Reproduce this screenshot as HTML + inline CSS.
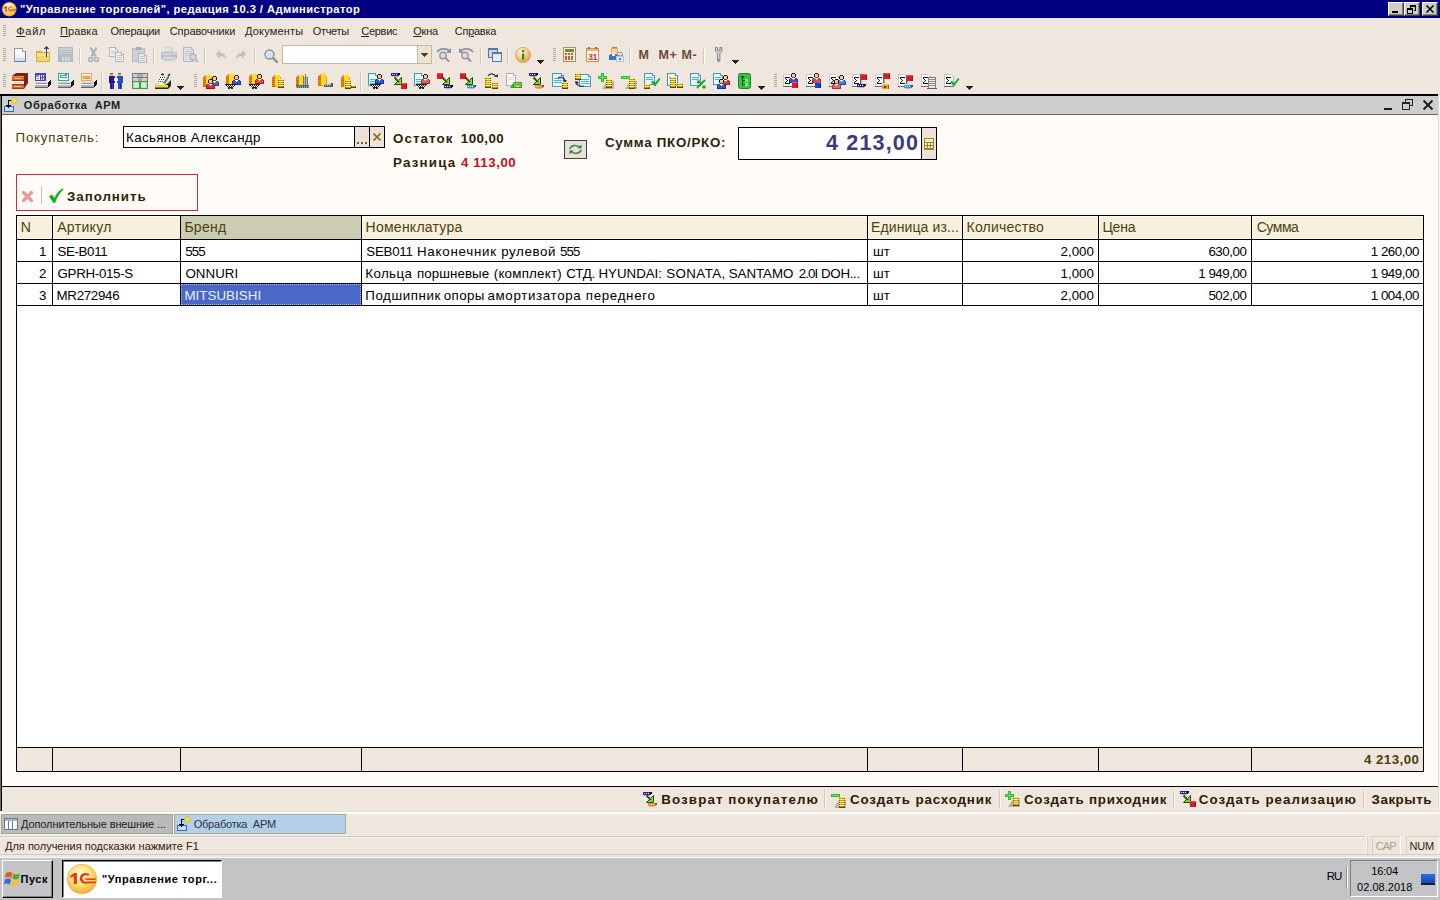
<!DOCTYPE html>
<html lang="ru"><head><meta charset="utf-8"><title>1C</title>
<style>
*{box-sizing:border-box;margin:0;padding:0}
html,body{width:1440px;height:900px;overflow:hidden;background:#efe6dd;font-family:"Liberation Sans",sans-serif}
body{position:relative}
.a{position:absolute}
.t{position:absolute;white-space:pre;line-height:1}
.t u{text-decoration:underline}
svg{overflow:visible}
</style></head>
<body>
<div class="a" style="left:0px;top:0px;width:1440px;height:18px;background:#000080;"></div>
<span class="t" style="left:20.00px;top:3.52px;font-size:11.2px;color:#fff;letter-spacing:0.432px;font-weight:bold;">&quot;Управление торговлей&quot;, редакция 10.3 / Администратор</span>
<div class="a" style="left:1388px;top:2px;width:16px;height:14px;background:#d0ccc8;border:1px solid;border-color:#fff #404040 #404040 #fff;box-shadow:inset -1px -1px 0 #808080"></div>
<div class="a" style="left:1404px;top:2px;width:16px;height:14px;background:#d0ccc8;border:1px solid;border-color:#fff #404040 #404040 #fff;box-shadow:inset -1px -1px 0 #808080"></div>
<div class="a" style="left:1422px;top:2px;width:16px;height:14px;background:#d0ccc8;border:1px solid;border-color:#fff #404040 #404040 #fff;box-shadow:inset -1px -1px 0 #808080"></div>
<div class="a" style="left:1392px;top:11px;width:6px;height:2px;background:#000;"></div>
<svg class="a" style="left:1404px;top:2px" width="16" height="14" shape-rendering="crispEdges"><path d="M6 3h6v2h-6zM6 5h1v1h-1zM11 5h1v4h-1zM10 8h2v1h-2zM3 6h6v2h-6zM3 8h1v4h-1zM8 8h1v4h-1zM3 11h6v1h-6z" fill="#000"/></svg>
<svg class="a" style="left:1422px;top:2px" width="16" height="14"><path d="M4.5 3.5l7 7M11.5 3.5l-7 7" stroke="#000" stroke-width="1.6"/></svg>
<span class="t" style="left:16.20px;top:25.69px;font-size:11px;color:#30240a;letter-spacing:0.758px;"><u>Ф</u>айл</span>
<span class="t" style="left:60.10px;top:25.69px;font-size:11px;color:#30240a;letter-spacing:0.052px;"><u>П</u>равка</span>
<span class="t" style="left:110.50px;top:25.69px;font-size:11px;color:#30240a;letter-spacing:-0.244px;">Операции</span>
<span class="t" style="left:169.70px;top:25.69px;font-size:11px;color:#30240a;letter-spacing:-0.099px;">Справочники</span>
<span class="t" style="left:245.00px;top:25.69px;font-size:11px;color:#30240a;letter-spacing:0.175px;">Документы</span>
<span class="t" style="left:312.70px;top:25.69px;font-size:11px;color:#30240a;letter-spacing:-0.323px;">Отчеты</span>
<span class="t" style="left:361.30px;top:25.69px;font-size:11px;color:#30240a;letter-spacing:-0.293px;"><u>С</u>ервис</span>
<span class="t" style="left:413.30px;top:25.69px;font-size:11px;color:#30240a;letter-spacing:-0.248px;"><u>О</u>кна</span>
<span class="t" style="left:454.80px;top:25.69px;font-size:11px;color:#30240a;letter-spacing:-0.272px;">Сп<u>р</u>авка</span>
<div class="a" style="left:0px;top:94px;width:1438px;height:2px;background:#000;"></div>
<div class="a" style="left:0px;top:96px;width:1px;height:716px;background:#6e6a66;"></div>
<div class="a" style="left:1px;top:96px;width:1px;height:716px;background:#000;"></div>
<div class="a" style="left:2px;top:96px;width:1436px;height:18px;background:#cecece;"></div>
<div class="a" style="left:2px;top:114px;width:1436px;height:1px;background:#6a6662;"></div>
<div class="a" style="left:2px;top:115px;width:1436px;height:671px;background:#fffcf7;"></div>
<div class="a" style="left:1438px;top:96px;width:1px;height:716px;background:#dcd8d4;"></div>
<div class="a" style="left:1439px;top:96px;width:1px;height:716px;background:#fffcf7;"></div>
<div class="a" style="left:2px;top:786px;width:1436px;height:1px;background:#000;"></div>
<span class="t" style="left:23.80px;top:99.69px;font-size:11px;color:#1c1c1c;letter-spacing:0.578px;font-weight:bold;">Обработка  АРМ</span>
<div class="a" style="left:1384px;top:108px;width:8px;height:2px;background:#1a1a1a;"></div>
<svg class="a" style="left:1398px;top:97px" width="18" height="16" shape-rendering="crispEdges"><path d="M7 2h8v1h-8zM7 3h1v2h-1zM14 3h1v6h-1zM12 8h2v1h-2zM4 5h8v2h-8zM4 7h1v5h-1zM11 7h1v5h-1zM4 12h8v1h-8z" fill="#222"/></svg>
<svg class="a" style="left:1420px;top:97px" width="16" height="16"><path d="M3.5 3.5l9 9M12.5 3.5l-9 9" stroke="#1a1a1a" stroke-width="1.8"/></svg>
<span class="t" style="left:15.60px;top:130.72px;font-size:13.33px;color:#4a3c12;letter-spacing:0.758px;">Покупатель:</span>
<div class="a" style="left:123px;top:126px;width:262px;height:22px;background:#fff;border:1px solid #000"></div>
<div class="a" style="left:354px;top:127px;width:1px;height:20px;background:#000;"></div>
<div class="a" style="left:369px;top:127px;width:1px;height:20px;background:#000;"></div>
<div class="a" style="left:355px;top:127px;width:14px;height:20px;background:#ebe3d9;"></div>
<div class="a" style="left:370px;top:127px;width:14px;height:20px;background:#ebe3d9;"></div>
<div class="a" style="left:357px;top:142px;width:2px;height:2px;background:#7a6a20;"></div>
<div class="a" style="left:361px;top:142px;width:2px;height:2px;background:#7a6a20;"></div>
<div class="a" style="left:365px;top:142px;width:2px;height:2px;background:#7a6a20;"></div>
<svg class="a" style="left:370px;top:127px" width="14" height="20"><path d="M3.5 6.5l7 7M10.5 6.5l-7 7" stroke="#80680c" stroke-width="1.7"/></svg>
<span class="t" style="left:126.00px;top:130.72px;font-size:13.33px;color:#000;letter-spacing:0.363px;">Касьянов Александр</span>
<span class="t" style="left:393.00px;top:131.72px;font-size:13.33px;color:#2e2408;letter-spacing:1.098px;font-weight:bold;">Остаток</span>
<span class="t" style="left:460.80px;top:131.72px;font-size:13.33px;color:#2e2408;letter-spacing:0.429px;font-weight:bold;">100,00</span>
<span class="t" style="left:393.00px;top:155.72px;font-size:13.33px;color:#2e2408;letter-spacing:1.214px;font-weight:bold;">Разница</span>
<span class="t" style="left:461.00px;top:155.72px;font-size:13.33px;color:#c8101c;letter-spacing:0.510px;font-weight:bold;">4 113,00</span>
<div class="a" style="left:564px;top:140px;width:23px;height:19px;background:#e6e2da;border:1px solid #404040"></div>
<svg class="a" style="left:567px;top:143px" width="17" height="13"><path d="M3 6a5 3.8 0 0 1 9.3-1.6" stroke="#4a8a4a" stroke-width="1.6" fill="none"/><path d="M14 6.6a5 3.8 0 0 1-9.3 1.8" stroke="#4a8a4a" stroke-width="1.6" fill="none"/><path d="M10.3 5.2h4.2v-3.8z" fill="#3a7a3a"/><path d="M6.7 7.6h-4.2v3.8z" fill="#3a7a3a"/></svg>
<span class="t" style="left:605.00px;top:135.72px;font-size:13.33px;color:#2e2408;letter-spacing:0.716px;font-weight:bold;">Сумма ПКО/РКО:</span>
<div class="a" style="left:738px;top:127px;width:199px;height:33px;background:#fff;border:1px solid #000"></div>
<div class="a" style="left:921px;top:128px;width:1px;height:31px;background:#000;"></div>
<div class="a" style="left:922px;top:128px;width:14px;height:31px;background:#ebe3d9;"></div>
<span class="t" style="left:826.00px;top:131.72px;font-size:21.6px;color:#3b3b7c;letter-spacing:1.136px;font-weight:bold;">4 213,00</span>
<svg class="a" style="left:923px;top:137px" width="12" height="14" shape-rendering="crispEdges"><rect x="1" y="1" width="10" height="12" fill="#9a8430"/><rect x="2" y="2" width="8" height="3" fill="#f4ecc0"/><g fill="#f4ecc0"><rect x="2" y="6" width="2" height="2"/><rect x="5" y="6" width="2" height="2"/><rect x="8" y="6" width="2" height="2"/><rect x="2" y="9" width="2" height="2"/><rect x="5" y="9" width="2" height="2"/><rect x="8" y="9" width="2" height="2"/></g></svg>
<div class="a" style="left:16px;top:174px;width:182px;height:37px;border:1px solid #c03038"></div>
<svg class="a" style="left:21px;top:190px" width="13" height="13"><path d="M2.5 2.5l8 8M10.5 2.5l-8 8" stroke="#e47474" stroke-width="2.8" stroke-linecap="round"/><path d="M2.5 2.5l8 8M10.5 2.5l-8 8" stroke="#f4a4a4" stroke-width="1.1" stroke-linecap="round"/></svg>
<div class="a" style="left:41px;top:186px;width:1px;height:18px;background:#c8c0b4;"></div>
<svg class="a" style="left:48px;top:188px" width="16" height="16"><path d="M1 8.5l3-2l2.5 3.5c1.5-4 4.5-7.5 8-9.5l1 1c-4 3.5-6.5 8-8.5 13.5h-1.500z" fill="#10b418"/></svg>
<span class="t" style="left:67.00px;top:189.72px;font-size:13.33px;color:#2e2408;letter-spacing:0.955px;font-weight:bold;">Заполнить</span>
<div class="a" style="left:16px;top:215px;width:1408px;height:557px;background:#fff;border:1px solid #000"></div>
<div class="a" style="left:17px;top:216px;width:35px;height:23px;background:#f7f0dc;box-shadow:inset 1px 1px 0 #fffcee,inset 0 -1px 0 #fbf6e6"></div>
<div class="a" style="left:17px;top:748px;width:35px;height:23px;background:#efe6dd;"></div>
<div class="a" style="left:53px;top:216px;width:127px;height:23px;background:#f7f0dc;box-shadow:inset 1px 1px 0 #fffcee,inset 0 -1px 0 #fbf6e6"></div>
<div class="a" style="left:53px;top:748px;width:127px;height:23px;background:#efe6dd;"></div>
<div class="a" style="left:181px;top:216px;width:180px;height:23px;background:#cbccb0;"></div>
<div class="a" style="left:181px;top:748px;width:180px;height:23px;background:#efe6dd;"></div>
<div class="a" style="left:362px;top:216px;width:505px;height:23px;background:#f7f0dc;box-shadow:inset 1px 1px 0 #fffcee,inset 0 -1px 0 #fbf6e6"></div>
<div class="a" style="left:362px;top:748px;width:505px;height:23px;background:#efe6dd;"></div>
<div class="a" style="left:868px;top:216px;width:94px;height:23px;background:#f7f0dc;box-shadow:inset 1px 1px 0 #fffcee,inset 0 -1px 0 #fbf6e6"></div>
<div class="a" style="left:868px;top:748px;width:94px;height:23px;background:#efe6dd;"></div>
<div class="a" style="left:963px;top:216px;width:135px;height:23px;background:#f7f0dc;box-shadow:inset 1px 1px 0 #fffcee,inset 0 -1px 0 #fbf6e6"></div>
<div class="a" style="left:963px;top:748px;width:135px;height:23px;background:#efe6dd;"></div>
<div class="a" style="left:1099px;top:216px;width:152px;height:23px;background:#f7f0dc;box-shadow:inset 1px 1px 0 #fffcee,inset 0 -1px 0 #fbf6e6"></div>
<div class="a" style="left:1099px;top:748px;width:152px;height:23px;background:#efe6dd;"></div>
<div class="a" style="left:1252px;top:216px;width:171px;height:23px;background:#f7f0dc;box-shadow:inset 1px 1px 0 #fffcee,inset 0 -1px 0 #fbf6e6"></div>
<div class="a" style="left:1252px;top:748px;width:171px;height:23px;background:#efe6dd;"></div>
<div class="a" style="left:52px;top:215px;width:1px;height:91px;background:#000;"></div>
<div class="a" style="left:52px;top:747px;width:1px;height:25px;background:#000;"></div>
<div class="a" style="left:180px;top:215px;width:1px;height:91px;background:#000;"></div>
<div class="a" style="left:180px;top:747px;width:1px;height:25px;background:#000;"></div>
<div class="a" style="left:361px;top:215px;width:1px;height:91px;background:#000;"></div>
<div class="a" style="left:361px;top:747px;width:1px;height:25px;background:#000;"></div>
<div class="a" style="left:867px;top:215px;width:1px;height:91px;background:#000;"></div>
<div class="a" style="left:867px;top:747px;width:1px;height:25px;background:#000;"></div>
<div class="a" style="left:962px;top:215px;width:1px;height:91px;background:#000;"></div>
<div class="a" style="left:962px;top:747px;width:1px;height:25px;background:#000;"></div>
<div class="a" style="left:1098px;top:215px;width:1px;height:91px;background:#000;"></div>
<div class="a" style="left:1098px;top:747px;width:1px;height:25px;background:#000;"></div>
<div class="a" style="left:1251px;top:215px;width:1px;height:91px;background:#000;"></div>
<div class="a" style="left:1251px;top:747px;width:1px;height:25px;background:#000;"></div>
<div class="a" style="left:16px;top:239px;width:1408px;height:1px;background:#000;"></div>
<div class="a" style="left:16px;top:261px;width:1408px;height:1px;background:#000;"></div>
<div class="a" style="left:16px;top:283px;width:1408px;height:1px;background:#000;"></div>
<div class="a" style="left:16px;top:305px;width:1408px;height:1px;background:#000;"></div>
<div class="a" style="left:16px;top:747px;width:1408px;height:1px;background:#000;"></div>
<span class="t" style="left:20.70px;top:220.15px;font-size:14px;color:#4d3f12;">N</span>
<span class="t" style="left:57.20px;top:220.15px;font-size:14px;color:#4d3f12;letter-spacing:0.346px;">Артикул</span>
<span class="t" style="left:184.40px;top:220.15px;font-size:14px;color:#4d3f12;letter-spacing:0.277px;">Бренд</span>
<span class="t" style="left:365.60px;top:220.15px;font-size:14px;color:#4d3f12;letter-spacing:0.248px;">Номенклатура</span>
<span class="t" style="left:871.00px;top:220.15px;font-size:14px;color:#4d3f12;letter-spacing:0.117px;">Единица из...</span>
<span class="t" style="left:966.50px;top:220.15px;font-size:14px;color:#4d3f12;letter-spacing:0.234px;">Количество</span>
<span class="t" style="left:1102.40px;top:220.15px;font-size:14px;color:#4d3f12;letter-spacing:-0.191px;">Цена</span>
<span class="t" style="left:1256.70px;top:220.15px;font-size:14px;color:#4d3f12;letter-spacing:-0.450px;">Сумма</span>
<div class="a" style="left:181px;top:284px;width:180px;height:21px;background:#4c68c6;border:1px dotted #a8b8f0"></div>
<span class="t" style="left:39.00px;top:244.72px;font-size:13.33px;color:#000;">1</span>
<span class="t" style="left:57.50px;top:244.72px;font-size:13.33px;color:#000;letter-spacing:-0.374px;">SE-B011</span>
<span class="t" style="left:185.30px;top:244.72px;font-size:13.33px;color:#000;letter-spacing:-0.900px;">555</span>
<span class="t" style="left:366.25px;top:244.72px;font-size:13.33px;color:#000;letter-spacing:-0.251px;">SEB011</span>
<span class="t" style="left:417.00px;top:244.72px;font-size:13.33px;color:#000;letter-spacing:0.749px;">Наконечник</span>
<span class="t" style="left:501.25px;top:244.72px;font-size:13.33px;color:#000;letter-spacing:0.597px;">рулевой</span>
<span class="t" style="left:560.00px;top:244.72px;font-size:13.33px;color:#000;letter-spacing:-0.900px;">555</span>
<span class="t" style="left:873.00px;top:244.72px;font-size:13.33px;color:#000;">шт</span>
<span class="t" style="left:1060.56px;top:244.72px;font-size:13.33px;color:#000;">2,000</span>
<span class="t" style="left:1208.40px;top:244.72px;font-size:13.33px;color:#000;letter-spacing:-0.450px;">630,00</span>
<span class="t" style="left:1370.68px;top:244.72px;font-size:13.33px;color:#000;letter-spacing:-0.450px;">1 260,00</span>
<span class="t" style="left:39.00px;top:266.72px;font-size:13.33px;color:#000;">2</span>
<span class="t" style="left:57.50px;top:266.72px;font-size:13.33px;color:#000;letter-spacing:-0.313px;">GPRH-015-S</span>
<span class="t" style="left:185.40px;top:266.72px;font-size:13.33px;color:#000;letter-spacing:0.046px;">ONNURI</span>
<span class="t" style="left:365.25px;top:266.72px;font-size:13.33px;color:#000;letter-spacing:0.402px;">Кольца</span>
<span class="t" style="left:417.00px;top:266.72px;font-size:13.33px;color:#000;letter-spacing:0.073px;">поршневые</span>
<span class="t" style="left:493.75px;top:266.72px;font-size:13.33px;color:#000;letter-spacing:0.224px;">(комплект)</span>
<span class="t" style="left:566.25px;top:266.72px;font-size:13.33px;color:#000;letter-spacing:-0.219px;">СТД.</span>
<span class="t" style="left:598.50px;top:266.72px;font-size:13.33px;color:#000;letter-spacing:-0.033px;">HYUNDAI:</span>
<span class="t" style="left:666.25px;top:266.72px;font-size:13.33px;color:#000;letter-spacing:0.404px;">SONATA,</span>
<span class="t" style="left:728.75px;top:266.72px;font-size:13.33px;color:#000;letter-spacing:-0.050px;">SANTAMO</span>
<span class="t" style="left:798.75px;top:266.72px;font-size:13.33px;color:#000;letter-spacing:-0.900px;">2.0I</span>
<span class="t" style="left:821.00px;top:266.72px;font-size:13.33px;color:#000;letter-spacing:-0.305px;">DOH...</span>
<span class="t" style="left:873.00px;top:266.72px;font-size:13.33px;color:#000;">шт</span>
<span class="t" style="left:1060.56px;top:266.72px;font-size:13.33px;color:#000;">1,000</span>
<span class="t" style="left:1198.18px;top:266.72px;font-size:13.33px;color:#000;letter-spacing:-0.450px;">1 949,00</span>
<span class="t" style="left:1370.68px;top:266.72px;font-size:13.33px;color:#000;letter-spacing:-0.450px;">1 949,00</span>
<span class="t" style="left:39.00px;top:288.72px;font-size:13.33px;color:#000;">3</span>
<span class="t" style="left:56.50px;top:288.72px;font-size:13.33px;color:#000;letter-spacing:-0.299px;">MR272946</span>
<span class="t" style="left:365.25px;top:288.72px;font-size:13.33px;color:#000;letter-spacing:0.577px;">Подшипник</span>
<span class="t" style="left:443.75px;top:288.72px;font-size:13.33px;color:#000;letter-spacing:0.386px;">опоры</span>
<span class="t" style="left:487.50px;top:288.72px;font-size:13.33px;color:#000;letter-spacing:0.644px;">амортизатора</span>
<span class="t" style="left:585.75px;top:288.72px;font-size:13.33px;color:#000;letter-spacing:0.684px;">переднего</span>
<span class="t" style="left:873.00px;top:288.72px;font-size:13.33px;color:#000;">шт</span>
<span class="t" style="left:1060.56px;top:288.72px;font-size:13.33px;color:#000;">2,000</span>
<span class="t" style="left:1208.40px;top:288.72px;font-size:13.33px;color:#000;letter-spacing:-0.450px;">502,00</span>
<span class="t" style="left:1370.68px;top:288.72px;font-size:13.33px;color:#000;letter-spacing:-0.450px;">1 004,00</span>
<span class="t" style="left:184.40px;top:288.72px;font-size:13.33px;color:#eaf0ff;letter-spacing:0.048px;">MITSUBISHI</span>
<span class="t" style="left:1364.00px;top:752.72px;font-size:13.33px;color:#4d3f12;letter-spacing:0.433px;font-weight:bold;">4 213,00</span>
<span class="t" style="left:661.30px;top:792.72px;font-size:13.33px;color:#2a2006;letter-spacing:1.110px;font-weight:bold;">Возврат покупателю</span>
<span class="t" style="left:850.00px;top:792.72px;font-size:13.33px;color:#2a2006;letter-spacing:0.859px;font-weight:bold;">Создать расходник</span>
<span class="t" style="left:1023.90px;top:792.72px;font-size:13.33px;color:#2a2006;letter-spacing:0.822px;font-weight:bold;">Создать приходник</span>
<span class="t" style="left:1198.80px;top:792.72px;font-size:13.33px;color:#2a2006;letter-spacing:1.013px;font-weight:bold;">Создать реализацию</span>
<span class="t" style="left:1371.60px;top:792.72px;font-size:13.33px;color:#2a2006;letter-spacing:0.519px;font-weight:bold;">Закрыть</span>
<div class="a" style="left:824px;top:790px;width:1px;height:18px;background:#cfc6b8;"></div>
<div class="a" style="left:825px;top:790px;width:1px;height:18px;background:#fbf6ee;"></div>
<div class="a" style="left:999px;top:790px;width:1px;height:18px;background:#cfc6b8;"></div>
<div class="a" style="left:1000px;top:790px;width:1px;height:18px;background:#fbf6ee;"></div>
<div class="a" style="left:1173px;top:790px;width:1px;height:18px;background:#cfc6b8;"></div>
<div class="a" style="left:1174px;top:790px;width:1px;height:18px;background:#fbf6ee;"></div>
<div class="a" style="left:1363px;top:790px;width:1px;height:18px;background:#cfc6b8;"></div>
<div class="a" style="left:1364px;top:790px;width:1px;height:18px;background:#fbf6ee;"></div>
<div class="a" style="left:0px;top:811px;width:1440px;height:1px;background:#e8e1da;"></div>
<div class="a" style="left:0px;top:812px;width:1440px;height:2px;background:#fdfcf7;"></div>
<div class="a" style="left:0px;top:834px;width:346px;height:2px;background:#efeee6;"></div>
<div class="a" style="left:1px;top:814px;width:172px;height:20px;background:#bababa;border:1px solid #a6a698"></div>
<div class="a" style="left:173px;top:814px;width:1px;height:20px;background:#fbf8f0;"></div>
<div class="a" style="left:174px;top:814px;width:172px;height:20px;background:#b4cfe8;border:1px solid #a6a698"></div>
<span class="t" style="left:21.00px;top:818.69px;font-size:11px;color:#222;letter-spacing:-0.100px;">Дополнительные внешние ...</span>
<span class="t" style="left:193.70px;top:818.69px;font-size:11px;color:#2c3440;letter-spacing:-0.219px;">Обработка  АРМ</span>
<div class="a" style="left:0px;top:836px;width:1367px;height:1px;background:#d2cabe;"></div>
<div class="a" style="left:0px;top:837px;width:1367px;height:1px;background:#f6f0e8;"></div>
<div class="a" style="left:1366px;top:836px;width:1px;height:19px;background:#fbf6ee;"></div>
<div class="a" style="left:1367px;top:836px;width:1px;height:19px;background:#d8d0c4;"></div>
<div class="a" style="left:0px;top:854px;width:1440px;height:1px;background:#d2cabe;"></div>
<div class="a" style="left:0px;top:855px;width:1440px;height:2px;background:#ece4de;"></div>
<div class="a" style="left:1372px;top:836px;width:29px;height:19px;border:1px solid;border-color:#d8cfc0 #fffdf8 #d8cfc0 #d8cfc0"></div>
<div class="a" style="left:1406px;top:836px;width:33px;height:19px;border:1px solid;border-color:#d8cfc0 #fffdf8 #d8cfc0 #d8cfc0"></div>
<span class="t" style="left:5.00px;top:840.69px;font-size:11px;color:#30240a;">Для получения подсказки нажмите F1</span>
<span class="t" style="left:1375.80px;top:840.69px;font-size:11px;color:#aaa28c;letter-spacing:-0.900px;">CAP</span>
<span class="t" style="left:1409.40px;top:840.69px;font-size:11px;color:#2a2410;letter-spacing:-0.144px;">NUM</span>
<div class="a" style="left:0px;top:857px;width:1440px;height:1px;background:#ffffff;"></div>
<div class="a" style="left:0px;top:858px;width:1440px;height:42px;background:#c4c4c7;"></div>
<div class="a" style="left:2px;top:860px;width:51px;height:38px;background:#c4c4c7;border:1px solid;border-color:#fff #000 #000 #fff;box-shadow:inset -1px -1px 0 #808080"></div>
<span class="t" style="left:20.60px;top:873.69px;font-size:11px;color:#000;letter-spacing:0.511px;font-weight:bold;">Пуск</span>
<div class="a" style="left:62px;top:860px;width:160px;height:38px;background:#fff;border:1px solid;border-color:#000 #fff #fff #000;box-shadow:inset 1px 1px 0 #808080"></div>
<span class="t" style="left:102.00px;top:873.69px;font-size:11px;color:#000;letter-spacing:0.564px;font-weight:bold;">&quot;Управление торг...</span>
<span class="t" style="left:1326.70px;top:871.27px;font-size:11.5px;color:#000;letter-spacing:-0.900px;">RU</span>
<div class="a" style="left:1347px;top:866px;width:1px;height:23px;background:#fff;"></div>
<div class="a" style="left:1346px;top:866px;width:1px;height:23px;background:#909090;"></div>
<div class="a" style="left:1350px;top:860px;width:88px;height:37px;background:#c4c4c7;border:1px solid;border-color:#808080 #fff #fff #808080"></div>
<span class="t" style="left:1371.30px;top:865.69px;font-size:11px;color:#000;letter-spacing:-0.177px;">16:04</span>
<span class="t" style="left:1357.00px;top:881.69px;font-size:11px;color:#000;letter-spacing:0.029px;">02.08.2018</span>
<div class="a" style="left:1421px;top:874px;width:14px;height:11px;background:linear-gradient(#2a6fe0,#1848b0);border-bottom:2px solid #102040"></div>
<svg class="a" style="left:3px;top:25px" width="3" height="12" shape-rendering="crispEdges"><rect x="0" y="0" width="3" height="1" fill="#b4aa9a"/><rect x="0" y="2" width="3" height="1" fill="#b4aa9a"/><rect x="0" y="4" width="3" height="1" fill="#b4aa9a"/><rect x="0" y="6" width="3" height="1" fill="#b4aa9a"/><rect x="0" y="8" width="3" height="1" fill="#b4aa9a"/><rect x="0" y="10" width="3" height="1" fill="#b4aa9a"/></svg><svg class="a" style="left:3px;top:48px" width="3" height="14" shape-rendering="crispEdges"><rect x="0" y="0" width="3" height="1" fill="#b4aa9a"/><rect x="0" y="2" width="3" height="1" fill="#b4aa9a"/><rect x="0" y="4" width="3" height="1" fill="#b4aa9a"/><rect x="0" y="6" width="3" height="1" fill="#b4aa9a"/><rect x="0" y="8" width="3" height="1" fill="#b4aa9a"/><rect x="0" y="10" width="3" height="1" fill="#b4aa9a"/><rect x="0" y="12" width="3" height="1" fill="#b4aa9a"/></svg><svg class="a" style="left:14px;top:48px" width="16" height="16" shape-rendering="crispEdges"><rect x="0" y="0" width="9" height="14" fill="#8e9ab0"/><rect x="9" y="3" width="3" height="11" fill="#8e9ab0"/><rect x="1" y="1" width="8" height="12" fill="#fff"/><rect x="9" y="4" width="2" height="9" fill="#fff"/><rect x="1" y="7" width="10" height="3" fill="#eef2fc"/><rect x="1" y="10" width="10" height="3" fill="#d0dcf4"/><rect x="8" y="1" width="1" height="3" fill="#8e9ab0"/><rect x="8" y="3" width="3" height="1" fill="#8e9ab0"/><rect x="0" y="13" width="12" height="1" fill="#707c90"/><rect x="11" y="3" width="1" height="11" fill="#707c90"/></svg><svg class="a" style="left:36px;top:47px" width="16" height="16" shape-rendering="crispEdges"><rect x="0" y="5" width="14" height="10" fill="#d8b048"/><rect x="1" y="6" width="12" height="8" fill="#f8e088"/><rect x="0" y="4" width="6" height="2" fill="#d8b048"/><rect x="1" y="9" width="12" height="5" fill="#f4d468"/><rect x="10" y="-1" width="1" height="11" fill="#2c4c70"/><rect x="9" y="0" width="3" height="1" fill="#2c4c70"/><rect x="8" y="1" width="5" height="1" fill="#2c4c70"/></svg><svg class="a" style="left:58px;top:47px;opacity:0.7" width="16" height="16" shape-rendering="crispEdges"><rect x="0" y="0" width="15" height="15" fill="#9aa6b8"/><rect x="1" y="1" width="13" height="6" fill="#b8c6d0"/><rect x="1" y="3" width="13" height="1" fill="#a4b0be"/><rect x="1" y="5" width="13" height="1" fill="#a4b0be"/><rect x="3" y="8" width="10" height="6" fill="#a4aec0"/><rect x="4" y="10" width="2" height="4" fill="#c8d0da"/><rect x="7" y="10" width="2" height="4" fill="#c8d0da"/><rect x="10" y="10" width="2" height="4" fill="#c8d0da"/></svg><svg class="a" style="left:79px;top:48px" width="2" height="16" shape-rendering="crispEdges"><rect x="0" y="0" width="1" height="16" fill="#d0c8bc"/><rect x="1" y="0" width="1" height="16" fill="#fdfaf4"/></svg><svg class="a" style="left:88px;top:47px;opacity:0.7" width="11" height="16"><path d="M2.5 0.5l5 9M8.5 0.5l-5 9" stroke="#8e9aae" stroke-width="2.2" fill="none"/><circle cx="2.6" cy="12.4" r="2" fill="none" stroke="#8e9aae" stroke-width="1.5"/><circle cx="8.4" cy="12.4" r="2" fill="none" stroke="#8e9aae" stroke-width="1.5"/></svg><svg class="a" style="left:109px;top:47px;opacity:0.7" width="16" height="16" shape-rendering="crispEdges"><g transform="translate(0,0)"><rect x="0" y="0" width="7" height="10" fill="#98a4b8"/><rect x="7" y="2" width="2" height="8" fill="#98a4b8"/><rect x="1" y="1" width="6" height="8" fill="#f4f6fa"/><rect x="7" y="3" width="1" height="6" fill="#f4f6fa"/><rect x="6" y="1" width="1" height="2" fill="#98a4b8"/><rect x="2" y="4" width="5" height="1" fill="#b0bac8"/><rect x="2" y="6" width="5" height="1" fill="#b0bac8"/></g><g transform="translate(6,5)"><rect x="0" y="0" width="7" height="10" fill="#98a4b8"/><rect x="7" y="2" width="2" height="8" fill="#98a4b8"/><rect x="1" y="1" width="6" height="8" fill="#f4f6fa"/><rect x="7" y="3" width="1" height="6" fill="#f4f6fa"/><rect x="6" y="1" width="1" height="2" fill="#98a4b8"/><rect x="2" y="3" width="5" height="1" fill="#b0bac8"/><rect x="2" y="5" width="5" height="1" fill="#b0bac8"/><rect x="2" y="7" width="5" height="1" fill="#b0bac8"/></g></svg><svg class="a" style="left:132px;top:47px;opacity:0.7" width="16" height="16" shape-rendering="crispEdges"><rect x="0" y="1" width="13" height="14" fill="#a0aabc"/><rect x="1" y="2" width="11" height="12" fill="#c0c8d4"/><rect x="4" y="0" width="5" height="3" fill="#8c98ac"/><g transform="translate(6,6)"><rect x="0" y="0" width="7" height="10" fill="#98a4b8"/><rect x="7" y="2" width="2" height="8" fill="#98a4b8"/><rect x="1" y="1" width="6" height="8" fill="#e8ecf2"/><rect x="7" y="3" width="1" height="6" fill="#e8ecf2"/><rect x="6" y="1" width="1" height="2" fill="#98a4b8"/><rect x="2" y="3" width="5" height="1" fill="#b0bac8"/><rect x="2" y="5" width="5" height="1" fill="#b0bac8"/><rect x="2" y="7" width="5" height="1" fill="#b0bac8"/></g></svg><svg class="a" style="left:153px;top:48px" width="2" height="16" shape-rendering="crispEdges"><rect x="0" y="0" width="1" height="16" fill="#d0c8bc"/><rect x="1" y="0" width="1" height="16" fill="#fdfaf4"/></svg><svg class="a" style="left:161px;top:47px;opacity:0.7" width="16" height="16" shape-rendering="crispEdges"><rect x="3" y="0" width="9" height="5" fill="#c8cdd6"/><rect x="0" y="5" width="16" height="7" fill="#a8b0be"/><rect x="1" y="6" width="14" height="2" fill="#c4cad4"/><rect x="2" y="10" width="12" height="5" fill="#d4d8e0"/><rect x="2" y="12" width="12" height="1" fill="#a8b0be"/><rect x="3" y="1" width="7" height="3" fill="#e0e4ea"/></svg><svg class="a" style="left:183px;top:47px;opacity:0.7" width="16" height="16" shape-rendering="crispEdges"><g transform="translate(0,0)"><rect x="0" y="0" width="9" height="15" fill="#a0aabc"/><rect x="9" y="2" width="2" height="13" fill="#a0aabc"/><rect x="1" y="1" width="8" height="13" fill="#d8dde6"/><rect x="9" y="3" width="1" height="11" fill="#d8dde6"/><rect x="8" y="1" width="1" height="2" fill="#a0aabc"/><rect x="2" y="4" width="7" height="1" fill="#b8c0cc"/><rect x="2" y="6" width="7" height="1" fill="#b8c0cc"/><rect x="2" y="8" width="7" height="1" fill="#b8c0cc"/></g><circle cx="10" cy="10" r="3" fill="#c8d0dc" stroke="#98a4b6" stroke-width="1.5" shape-rendering="auto"/><path d="M12 12l3 3" fill="none" stroke="#98a4b6" stroke-width="2" shape-rendering="auto"/></svg><svg class="a" style="left:204px;top:48px" width="2" height="16" shape-rendering="crispEdges"><rect x="0" y="0" width="1" height="16" fill="#d0c8bc"/><rect x="1" y="0" width="1" height="16" fill="#fdfaf4"/></svg><svg class="a" style="left:216px;top:50px;opacity:0.7" width="10" height="10" shape-rendering="crispEdges"><path d="M0 4l4-4v3c4 0 6 2 6 7c-1-3-3-4-6-4v3z" fill="#a8b2b0" shape-rendering="auto"/></svg><svg class="a" style="left:236px;top:50px;opacity:0.7" width="10" height="10" shape-rendering="crispEdges"><path d="M10 4l-4-4v3c-4 0-6 2-6 7c1-3 3-4 6-4v3z" fill="#a8b2b0" shape-rendering="auto"/></svg><svg class="a" style="left:254px;top:48px" width="2" height="16" shape-rendering="crispEdges"><rect x="0" y="0" width="1" height="16" fill="#d0c8bc"/><rect x="1" y="0" width="1" height="16" fill="#fdfaf4"/></svg><svg class="a" style="left:264px;top:49px" width="15" height="15"><circle cx="5.5" cy="5.5" r="4.5" fill="#d4e2f6" stroke="#8894a8" stroke-width="1.4"/><path d="M9 9l4 4" stroke="#a08870" stroke-width="2.4" stroke-linecap="round"/></svg><div class="a" style="left:282px;top:45px;width:150px;height:19px;background:#fff;border:1px solid #c4b8a0"></div><div class="a" style="left:417px;top:46px;width:14px;height:17px;background:#ece4d0;border-left:1px solid #c4b8a0"></div><svg class="a" style="left:421px;top:53px" width="7" height="4" shape-rendering="crispEdges"><rect x="0" y="0" width="7" height="1" fill="#4a4010"/><rect x="1" y="1" width="5" height="1" fill="#4a4010"/><rect x="2" y="2" width="3" height="1" fill="#4a4010"/><rect x="3" y="3" width="1" height="1" fill="#4a4010"/></svg><svg class="a" style="left:436px;top:47px;opacity:0.8" width="16" height="16"><circle cx="7" cy="8.5" r="3.2" fill="#e8d8dc" stroke="#8c8088" stroke-width="1.4"/><path d="M9.5 11l3 3" stroke="#8c8088" stroke-width="2" stroke-linecap="round"/><path d="M1 5c3-4 9-4 13-1" fill="none" stroke="#6c8098" stroke-width="1.6"/><path d="M15 1v5h-5z" fill="#6c8098"/></svg><svg class="a" style="left:458px;top:47px;opacity:0.8" width="16" height="16"><circle cx="7" cy="8.5" r="3.2" fill="#e8d8dc" stroke="#8c8088" stroke-width="1.4"/><path d="M9.5 11l3 3" stroke="#8c8088" stroke-width="2" stroke-linecap="round"/><path d="M15 5c-3-4-9-4-13-1" fill="none" stroke="#6c8098" stroke-width="1.6"/><path d="M1 1v5h5z" fill="#6c8098"/></svg><svg class="a" style="left:480px;top:48px" width="2" height="16" shape-rendering="crispEdges"><rect x="0" y="0" width="1" height="16" fill="#d0c8bc"/><rect x="1" y="0" width="1" height="16" fill="#fdfaf4"/></svg><svg class="a" style="left:488px;top:48px" width="16" height="16" shape-rendering="crispEdges"><rect x="0" y="0" width="10" height="10" fill="#5878a0"/><rect x="1" y="2" width="8" height="7" fill="#c8d8f0"/><rect x="4" y="4" width="10" height="10" fill="#5878a0"/><rect x="5" y="6" width="8" height="7" fill="#e4ecf8"/></svg><svg class="a" style="left:507px;top:48px" width="2" height="16" shape-rendering="crispEdges"><rect x="0" y="0" width="1" height="16" fill="#d0c8bc"/><rect x="1" y="0" width="1" height="16" fill="#fdfaf4"/></svg><svg class="a" style="left:515px;top:47px" width="16" height="16"><defs><radialGradient id="ig" cx="40%" cy="30%" r="70%"><stop offset="0" stop-color="#fff6e0"/><stop offset=".5" stop-color="#f8d090"/><stop offset="1" stop-color="#e0a048"/></radialGradient></defs><circle cx="8" cy="8" r="7.6" fill="url(#ig)" stroke="#d8a050" stroke-width=".8"/><rect x="7" y="6.5" width="2.2" height="6" fill="#2e8a10"/><rect x="7" y="3" width="2.2" height="2.2" fill="#2e8a10"/></svg><svg class="a" style="left:537px;top:60px" width="7" height="4" shape-rendering="crispEdges"><rect x="0" y="0" width="7" height="1" fill="#2a2008"/><rect x="1" y="1" width="5" height="1" fill="#2a2008"/><rect x="2" y="2" width="3" height="1" fill="#2a2008"/><rect x="3" y="3" width="1" height="1" fill="#2a2008"/></svg><svg class="a" style="left:553px;top:48px" width="3" height="14" shape-rendering="crispEdges"><rect x="0" y="0" width="3" height="1" fill="#b4aa9a"/><rect x="0" y="2" width="3" height="1" fill="#b4aa9a"/><rect x="0" y="4" width="3" height="1" fill="#b4aa9a"/><rect x="0" y="6" width="3" height="1" fill="#b4aa9a"/><rect x="0" y="8" width="3" height="1" fill="#b4aa9a"/><rect x="0" y="10" width="3" height="1" fill="#b4aa9a"/><rect x="0" y="12" width="3" height="1" fill="#b4aa9a"/></svg><svg class="a" style="left:563px;top:47px" width="16" height="16" shape-rendering="crispEdges"><rect x="0" y="0" width="13" height="15" fill="#a89060"/><rect x="1" y="1" width="11" height="13" fill="#f8f0dc"/><rect x="2" y="2" width="9" height="3" fill="#689040"/><rect x="2" y="6" width="2" height="2" fill="#c86030"/><rect x="5" y="6" width="2" height="2" fill="#c86030"/><rect x="8" y="6" width="2" height="2" fill="#c86030"/><rect x="2" y="9" width="2" height="2" fill="#c86030"/><rect x="5" y="9" width="2" height="2" fill="#c86030"/><rect x="8" y="9" width="2" height="2" fill="#c86030"/><rect x="2" y="11" width="2" height="2" fill="#a07040"/><rect x="5" y="11" width="2" height="2" fill="#a07040"/><rect x="8" y="11" width="2" height="2" fill="#a07040"/></svg><svg class="a" style="left:586px;top:47px" width="16" height="16" shape-rendering="crispEdges"><rect x="0" y="1" width="13" height="14" fill="#e08848"/><rect x="1" y="4" width="11" height="10" fill="#fff"/><rect x="2" y="0" width="2" height="3" fill="#c06020"/><rect x="9" y="0" width="2" height="3" fill="#c06020"/><rect x="1" y="2" width="11" height="2" fill="#f4b080"/><text x="6.5" y="12.5" font-family="Liberation Sans" font-size="9" font-weight="bold" fill="#d83818" text-anchor="middle" shape-rendering="auto" letter-spacing="-0.5">31</text></svg><svg class="a" style="left:609px;top:47px" width="16" height="16" shape-rendering="crispEdges"><rect x="3" y="0" width="5" height="2" fill="#c87820"/><rect x="2" y="1" width="7" height="5" fill="#f0a850"/><rect x="3" y="2" width="5" height="4" fill="#f8d0a0"/><rect x="0" y="8" width="9" height="5" fill="#3878c8"/><rect x="1" y="7" width="7" height="1" fill="#3878c8"/><rect x="3" y="7" width="3" height="2" fill="#e8f0f8"/><rect x="8" y="8" width="6" height="1" fill="#8894a8"/><rect x="8" y="6" width="1" height="3" fill="#8894a8"/><rect x="13" y="6" width="1" height="3" fill="#8894a8"/><rect x="9" y="5" width="4" height="1" fill="#8894a8"/><rect x="7" y="9" width="8" height="6" fill="#b8c4d4"/><rect x="8" y="10" width="6" height="4" fill="#e4eaf2"/><rect x="10" y="11" width="2" height="2" fill="#6878a0"/></svg><svg class="a" style="left:629px;top:48px" width="2" height="16" shape-rendering="crispEdges"><rect x="0" y="0" width="1" height="16" fill="#d0c8bc"/><rect x="1" y="0" width="1" height="16" fill="#fdfaf4"/></svg><svg class="a" style="left:703px;top:48px" width="2" height="16" shape-rendering="crispEdges"><rect x="0" y="0" width="1" height="16" fill="#d0c8bc"/><rect x="1" y="0" width="1" height="16" fill="#fdfaf4"/></svg><svg class="a" style="left:713px;top:47px" width="11" height="16"><path d="M2.5 0.5v4l2 2v7a1.2 1.2 0 0 0 2.4 0v-7l2-2v-4l-2 0v3h-2.4v-3z" fill="#d0d0d0" stroke="#808890" stroke-width="1"/><circle cx="5.7" cy="13" r=".8" fill="#606870"/></svg><svg class="a" style="left:732px;top:60px" width="7" height="4" shape-rendering="crispEdges"><rect x="0" y="0" width="7" height="1" fill="#2a2008"/><rect x="1" y="1" width="5" height="1" fill="#2a2008"/><rect x="2" y="2" width="3" height="1" fill="#2a2008"/><rect x="3" y="3" width="1" height="1" fill="#2a2008"/></svg><svg class="a" style="left:3px;top:74px" width="3" height="14" shape-rendering="crispEdges"><rect x="0" y="0" width="3" height="1" fill="#b4aa9a"/><rect x="0" y="2" width="3" height="1" fill="#b4aa9a"/><rect x="0" y="4" width="3" height="1" fill="#b4aa9a"/><rect x="0" y="6" width="3" height="1" fill="#b4aa9a"/><rect x="0" y="8" width="3" height="1" fill="#b4aa9a"/><rect x="0" y="10" width="3" height="1" fill="#b4aa9a"/><rect x="0" y="12" width="3" height="1" fill="#b4aa9a"/></svg><svg class="a" style="left:12px;top:73px" width="16" height="16" shape-rendering="crispEdges"><path d="M0 3l4-3h12v10l-4 6h-12z" fill="#7a2418" shape-rendering="auto"/><rect x="0" y="3" width="12" height="13" fill="#e85c14"/><rect x="0" y="3" width="12" height="1" fill="#f89048"/><rect x="2" y="5" width="8" height="1" fill="#ffc890"/><rect x="0" y="7" width="12" height="1" fill="#a83808"/><rect x="0" y="8" width="12" height="3" fill="#f4f4f4"/><rect x="2" y="9" width="8" height="1" fill="#d0d0d0"/><rect x="0" y="11" width="12" height="1" fill="#a83808"/><rect x="2" y="13" width="8" height="1" fill="#ffc890"/><rect x="0" y="15" width="12" height="1" fill="#a83808"/></svg><svg class="a" style="left:35px;top:73px" width="16" height="16" shape-rendering="crispEdges"><g transform="translate(0,6)"><path d="M2 3h11l3-3v5l-3 3h-11z" fill="#101010" /><path d="M1 3l3-3h11l-3 3z" fill="#e8e8e8" /><rect x="0" y="3" width="13" height="2" fill="#d8d8d8"/><rect x="0" y="5" width="13" height="1" fill="#f8f8f8"/><rect x="0" y="6" width="13" height="2" fill="#b0b0b0"/><rect x="0" y="8" width="13" height="1" fill="#606060"/><rect x="1" y="4" width="11" height="1" fill="#909090"/></g><rect x="0" y="0" width="11" height="8" fill="#4444b8"/><rect x="1" y="1" width="9" height="6" fill="#fff"/><rect x="1" y="1" width="9" height="1" fill="#4444b8"/><rect x="5" y="2" width="1" height="5" fill="#4444b8"/><rect x="7" y="2" width="1" height="5" fill="#4444b8"/><rect x="9" y="2" width="1" height="5" fill="#4444b8"/><rect x="1" y="2" width="3" height="2" fill="#8888e0"/><rect x="1" y="5" width="3" height="1" fill="#8888e0"/><rect x="5" y="4" width="5" height="1" fill="#4444b8"/></svg><svg class="a" style="left:58px;top:73px" width="16" height="16" shape-rendering="crispEdges"><g transform="translate(0,6)"><path d="M2 3h11l3-3v5l-3 3h-11z" fill="#101010" /><path d="M1 3l3-3h11l-3 3z" fill="#e8e8e8" /><rect x="0" y="3" width="13" height="2" fill="#d8d8d8"/><rect x="0" y="5" width="13" height="1" fill="#f8f8f8"/><rect x="0" y="6" width="13" height="2" fill="#b0b0b0"/><rect x="0" y="8" width="13" height="1" fill="#606060"/><rect x="1" y="4" width="11" height="1" fill="#909090"/></g><rect x="0" y="0" width="11" height="8" fill="#38a0a0"/><rect x="1" y="1" width="9" height="6" fill="#f0ffff"/><rect x="2" y="2" width="5" height="1" fill="#38a0a0"/><rect x="2" y="4" width="7" height="1" fill="#38a0a0"/><rect x="2" y="2" width="1" height="3" fill="#38a0a0"/><rect x="7" y="1" width="2" height="2" fill="#38a0a0"/></svg><svg class="a" style="left:81px;top:73px" width="16" height="16" shape-rendering="crispEdges"><g transform="translate(0,6)"><path d="M2 3h11l3-3v5l-3 3h-11z" fill="#101010" /><path d="M1 3l3-3h11l-3 3z" fill="#e8e8e8" /><rect x="0" y="3" width="13" height="2" fill="#d8d8d8"/><rect x="0" y="5" width="13" height="1" fill="#f8f8f8"/><rect x="0" y="6" width="13" height="2" fill="#b0b0b0"/><rect x="0" y="8" width="13" height="1" fill="#606060"/><rect x="1" y="4" width="11" height="1" fill="#909090"/></g><rect x="0" y="0" width="11" height="8" fill="#f0a050"/><rect x="1" y="1" width="9" height="6" fill="#fff0d8"/><rect x="2" y="3" width="7" height="3" fill="#e08838"/><rect x="3" y="4" width="2" height="1" fill="#fff0d8"/><rect x="6" y="4" width="2" height="1" fill="#fff0d8"/></svg><svg class="a" style="left:101px;top:71px" width="2" height="20" shape-rendering="crispEdges"><rect x="0" y="0" width="1" height="20" fill="#d0c8bc"/><rect x="1" y="0" width="1" height="20" fill="#fdfaf4"/></svg><svg class="a" style="left:109px;top:73px" width="16" height="16" shape-rendering="crispEdges"><rect x="1" y="0" width="3" height="3" fill="#e8a078"/><rect x="9" y="0" width="3" height="3" fill="#c8b078"/><rect x="1" y="0" width="3" height="1" fill="#a05030"/><rect x="9" y="0" width="3" height="1" fill="#606030"/><rect x="0" y="3" width="6" height="7" fill="#1c1c94"/><rect x="1" y="10" width="4" height="6" fill="#1c1c94"/><rect x="8" y="3" width="6" height="7" fill="#2c4cc4"/><rect x="9" y="10" width="4" height="6" fill="#2c4cc4"/><rect x="5" y="5" width="4" height="3" fill="#f4f4ff"/><rect x="6" y="8" width="2" height="4" fill="#f4f4ff"/><rect x="3" y="10" width="1" height="6" fill="#3838b0"/><rect x="11" y="10" width="1" height="6" fill="#1c30a0"/></svg><svg class="a" style="left:132px;top:73px" width="16" height="16" shape-rendering="crispEdges"><rect x="0" y="0" width="16" height="16" fill="#787878"/><rect x="1" y="1" width="14" height="3" fill="#d0d0d8"/><rect x="1" y="5" width="14" height="3" fill="#c8d4cc"/><rect x="1" y="9" width="14" height="6" fill="#a0e8a0"/><rect x="5" y="1" width="6" height="3" fill="#a8a8b0"/><rect x="6" y="5" width="4" height="3" fill="#a0aca4"/><ellipse cx="4.5" cy="12" rx="2.5" ry="2.5" fill="#d0f8d0" shape-rendering="auto"/><ellipse cx="11.5" cy="12" rx="2.5" ry="2.5" fill="#d0f8d0" shape-rendering="auto"/><rect x="7" y="9" width="2" height="6" fill="#409850"/></svg><svg class="a" style="left:155px;top:73px" width="16" height="16" shape-rendering="crispEdges"><path d="M0 12l3-2h10l3-3v6l-3 3h-13z" fill="#282828" shape-rendering="auto"/><rect x="0" y="12" width="13" height="2" fill="#e4d848"/><rect x="0" y="14" width="13" height="1" fill="#8c8420"/><path d="M0 12l3-2h10l-3 2z" fill="#f8f4c0" shape-rendering="auto"/><path d="M1 10l4-6h6l-4 6z" fill="#fff" shape-rendering="auto"/><rect x="5" y="4" width="1" height="1" fill="#2030a8"/><rect x="7" y="4" width="1" height="1" fill="#2030a8"/><rect x="9" y="4" width="1" height="1" fill="#2030a8"/><rect x="4" y="6" width="1" height="1" fill="#2030a8"/><rect x="6" y="6" width="1" height="1" fill="#2030a8"/><rect x="8" y="6" width="1" height="1" fill="#2030a8"/><rect x="3" y="8" width="1" height="1" fill="#2030a8"/><rect x="5" y="8" width="1" height="1" fill="#2030a8"/><rect x="7" y="8" width="1" height="1" fill="#2030a8"/><rect x="6" y="1" width="3" height="1" fill="#202020"/><rect x="7" y="0" width="1" height="1" fill="#606060"/><rect x="6" y="2" width="3" height="1" fill="#c8c8c8"/><path d="M8 10l5-7l1.5 1l-4.5 7z" fill="#5c8c40" shape-rendering="auto"/><path d="M13 3l2-2" fill="none" stroke="#202020" stroke-width="1.5" shape-rendering="auto"/></svg><svg class="a" style="left:177px;top:86px" width="7" height="4" shape-rendering="crispEdges"><rect x="0" y="0" width="7" height="1" fill="#2a2008"/><rect x="1" y="1" width="5" height="1" fill="#2a2008"/><rect x="2" y="2" width="3" height="1" fill="#2a2008"/><rect x="3" y="3" width="1" height="1" fill="#2a2008"/></svg><svg class="a" style="left:194px;top:74px" width="3" height="14" shape-rendering="crispEdges"><rect x="0" y="0" width="3" height="1" fill="#b4aa9a"/><rect x="0" y="2" width="3" height="1" fill="#b4aa9a"/><rect x="0" y="4" width="3" height="1" fill="#b4aa9a"/><rect x="0" y="6" width="3" height="1" fill="#b4aa9a"/><rect x="0" y="8" width="3" height="1" fill="#b4aa9a"/><rect x="0" y="10" width="3" height="1" fill="#b4aa9a"/><rect x="0" y="12" width="3" height="1" fill="#b4aa9a"/></svg><svg class="a" style="left:203px;top:73px" width="16" height="16" shape-rendering="crispEdges"><g transform="translate(0,1)"><rect x="0" y="3" width="3" height="10" fill="#e8881c"/><rect x="1" y="2" width="2" height="1" fill="#e8881c"/><rect x="2" y="1" width="1" height="1" fill="#e8881c"/><rect x="0" y="4" width="3" height="1" fill="#d06c08"/><rect x="0" y="6" width="3" height="1" fill="#d06c08"/><rect x="0" y="8" width="3" height="1" fill="#d06c08"/><rect x="0" y="10" width="3" height="1" fill="#d06c08"/><rect x="0" y="12" width="3" height="1" fill="#d06c08"/><rect x="3" y="2" width="5" height="11" fill="#fcdc20"/><rect x="4" y="1" width="4" height="1" fill="#fcdc20"/><rect x="5" y="0" width="2" height="1" fill="#fce860"/><rect x="8" y="3" width="1" height="10" fill="#e0a818"/><rect x="3" y="12" width="5" height="1" fill="#e8b818"/></g><g transform="translate(7,3)"><rect x="3" y="0" width="3" height="1" fill="#2a160c"/><rect x="2" y="1" width="1" height="3" fill="#2a160c"/><rect x="6" y="1" width="1" height="3" fill="#2a160c"/><rect x="3" y="1" width="3" height="3" fill="#f6c4a0"/><rect x="3" y="4" width="3" height="1" fill="#7a3c28"/><rect x="2" y="5" width="5" height="1" fill="#3870c0"/><rect x="0" y="6" width="9" height="4" fill="#3870c0"/><rect x="1" y="5" width="1" height="1" fill="#204890"/><rect x="7" y="5" width="1" height="1" fill="#204890"/><rect x="0" y="6" width="1" height="4" fill="#204890"/><rect x="8" y="6" width="1" height="4" fill="#204890"/><rect x="0" y="9" width="9" height="1" fill="#204890"/><rect x="4" y="5" width="1" height="2" fill="#fff"/><rect x="3" y="5" width="1" height="1" fill="#fff"/><rect x="5" y="5" width="1" height="1" fill="#fff"/></g><g transform="translate(3,6)"><rect x="3" y="0" width="3" height="1" fill="#2a160c"/><rect x="2" y="1" width="1" height="3" fill="#2a160c"/><rect x="6" y="1" width="1" height="3" fill="#2a160c"/><rect x="3" y="1" width="3" height="3" fill="#f6c4a0"/><rect x="3" y="4" width="3" height="1" fill="#7a3c28"/><rect x="2" y="5" width="5" height="1" fill="#e42830"/><rect x="0" y="6" width="9" height="4" fill="#e42830"/><rect x="1" y="5" width="1" height="1" fill="#a81018"/><rect x="7" y="5" width="1" height="1" fill="#a81018"/><rect x="0" y="6" width="1" height="4" fill="#a81018"/><rect x="8" y="6" width="1" height="4" fill="#a81018"/><rect x="0" y="9" width="9" height="1" fill="#a81018"/><rect x="4" y="5" width="1" height="2" fill="#fff"/><rect x="3" y="5" width="1" height="1" fill="#fff"/><rect x="5" y="5" width="1" height="1" fill="#fff"/></g></svg><svg class="a" style="left:225px;top:73px" width="16" height="16" shape-rendering="crispEdges"><g transform="translate(1,0)"><rect x="0" y="3" width="3" height="10" fill="#e8881c"/><rect x="1" y="2" width="2" height="1" fill="#e8881c"/><rect x="2" y="1" width="1" height="1" fill="#e8881c"/><rect x="0" y="4" width="3" height="1" fill="#d06c08"/><rect x="0" y="6" width="3" height="1" fill="#d06c08"/><rect x="0" y="8" width="3" height="1" fill="#d06c08"/><rect x="0" y="10" width="3" height="1" fill="#d06c08"/><rect x="0" y="12" width="3" height="1" fill="#d06c08"/><rect x="3" y="2" width="5" height="11" fill="#fcdc20"/><rect x="4" y="1" width="4" height="1" fill="#fcdc20"/><rect x="5" y="0" width="2" height="1" fill="#fce860"/><rect x="8" y="3" width="1" height="10" fill="#e0a818"/><rect x="3" y="12" width="5" height="1" fill="#e8b818"/></g><g transform="translate(7,2)"><rect x="3" y="0" width="3" height="1" fill="#2a160c"/><rect x="2" y="1" width="1" height="3" fill="#2a160c"/><rect x="6" y="1" width="1" height="3" fill="#2a160c"/><rect x="3" y="1" width="3" height="3" fill="#f6c4a0"/><rect x="3" y="4" width="3" height="1" fill="#7a3c28"/><rect x="2" y="5" width="5" height="1" fill="#3058d0"/><rect x="0" y="6" width="9" height="4" fill="#3058d0"/><rect x="1" y="5" width="1" height="1" fill="#1830a0"/><rect x="7" y="5" width="1" height="1" fill="#1830a0"/><rect x="0" y="6" width="1" height="4" fill="#1830a0"/><rect x="8" y="6" width="1" height="4" fill="#1830a0"/><rect x="0" y="9" width="9" height="1" fill="#1830a0"/><rect x="4" y="5" width="1" height="2" fill="#fff"/><rect x="3" y="5" width="1" height="1" fill="#fff"/><rect x="5" y="5" width="1" height="1" fill="#fff"/></g><g transform="translate(0,11)"><rect x="0" y="0" width="11" height="1" fill="#1c2420"/><rect x="1" y="1" width="9" height="1" fill="#1c2420"/><rect x="2" y="2" width="7" height="1" fill="#1c2420"/><rect x="3" y="3" width="5" height="1" fill="#1c2420"/><rect x="2" y="1" width="1" height="1" fill="#fff"/><rect x="4" y="1" width="1" height="1" fill="#fff"/><rect x="6" y="1" width="1" height="1" fill="#fff"/><rect x="8" y="1" width="1" height="1" fill="#fff"/><rect x="3" y="2" width="1" height="1" fill="#fff"/><rect x="5" y="2" width="1" height="1" fill="#fff"/><rect x="7" y="2" width="1" height="1" fill="#fff"/><rect x="3" y="4" width="2" height="1" fill="#1c2420"/><rect x="6" y="4" width="2" height="1" fill="#1c2420"/></g></svg><svg class="a" style="left:248px;top:73px" width="16" height="16" shape-rendering="crispEdges"><g transform="translate(1,0)"><rect x="0" y="3" width="3" height="10" fill="#e8881c"/><rect x="1" y="2" width="2" height="1" fill="#e8881c"/><rect x="2" y="1" width="1" height="1" fill="#e8881c"/><rect x="0" y="4" width="3" height="1" fill="#d06c08"/><rect x="0" y="6" width="3" height="1" fill="#d06c08"/><rect x="0" y="8" width="3" height="1" fill="#d06c08"/><rect x="0" y="10" width="3" height="1" fill="#d06c08"/><rect x="0" y="12" width="3" height="1" fill="#d06c08"/><rect x="3" y="2" width="5" height="11" fill="#fcdc20"/><rect x="4" y="1" width="4" height="1" fill="#fcdc20"/><rect x="5" y="0" width="2" height="1" fill="#fce860"/><rect x="8" y="3" width="1" height="10" fill="#e0a818"/><rect x="3" y="12" width="5" height="1" fill="#e8b818"/></g><g transform="translate(7,1)"><rect x="3" y="0" width="3" height="1" fill="#2a160c"/><rect x="2" y="1" width="1" height="3" fill="#2a160c"/><rect x="6" y="1" width="1" height="3" fill="#2a160c"/><rect x="3" y="1" width="3" height="3" fill="#f6c4a0"/><rect x="3" y="4" width="3" height="1" fill="#7a3c28"/><rect x="2" y="5" width="5" height="1" fill="#e04850"/><rect x="0" y="6" width="9" height="4" fill="#e04850"/><rect x="1" y="5" width="1" height="1" fill="#a02028"/><rect x="7" y="5" width="1" height="1" fill="#a02028"/><rect x="0" y="6" width="1" height="4" fill="#a02028"/><rect x="8" y="6" width="1" height="4" fill="#a02028"/><rect x="0" y="9" width="9" height="1" fill="#a02028"/><rect x="4" y="5" width="1" height="2" fill="#fff"/><rect x="3" y="5" width="1" height="1" fill="#fff"/><rect x="5" y="5" width="1" height="1" fill="#fff"/></g><g transform="translate(1,11)"><rect x="0" y="0" width="11" height="1" fill="#1c2420"/><rect x="1" y="1" width="9" height="1" fill="#1c2420"/><rect x="2" y="2" width="7" height="1" fill="#1c2420"/><rect x="3" y="3" width="5" height="1" fill="#1c2420"/><rect x="2" y="1" width="1" height="1" fill="#fff"/><rect x="4" y="1" width="1" height="1" fill="#fff"/><rect x="6" y="1" width="1" height="1" fill="#fff"/><rect x="8" y="1" width="1" height="1" fill="#fff"/><rect x="3" y="2" width="1" height="1" fill="#fff"/><rect x="5" y="2" width="1" height="1" fill="#fff"/><rect x="7" y="2" width="1" height="1" fill="#fff"/><rect x="3" y="4" width="2" height="1" fill="#1c2420"/><rect x="6" y="4" width="2" height="1" fill="#1c2420"/></g></svg><svg class="a" style="left:271px;top:73px" width="16" height="16" shape-rendering="crispEdges"><g transform="translate(1,1)"><rect x="0" y="3" width="3" height="10" fill="#e8881c"/><rect x="1" y="2" width="2" height="1" fill="#e8881c"/><rect x="2" y="1" width="1" height="1" fill="#e8881c"/><rect x="0" y="4" width="3" height="1" fill="#d06c08"/><rect x="0" y="6" width="3" height="1" fill="#d06c08"/><rect x="0" y="8" width="3" height="1" fill="#d06c08"/><rect x="0" y="10" width="3" height="1" fill="#d06c08"/><rect x="0" y="12" width="3" height="1" fill="#d06c08"/><rect x="3" y="2" width="5" height="11" fill="#fcdc20"/><rect x="4" y="1" width="4" height="1" fill="#fcdc20"/><rect x="5" y="0" width="2" height="1" fill="#fce860"/><rect x="8" y="3" width="1" height="10" fill="#e0a818"/><rect x="3" y="12" width="5" height="1" fill="#e8b818"/></g><g transform="translate(7,6)"><rect x="0" y="0" width="6" height="1" fill="#fce048"/><rect x="1" y="0" width="4" height="1" fill="#fff088"/><rect x="0" y="1" width="6" height="1" fill="#7a5c00"/><rect x="1" y="1" width="4" height="1" fill="#c89c10"/><rect x="0" y="2" width="6" height="1" fill="#fce048"/><rect x="1" y="2" width="4" height="1" fill="#fff088"/><rect x="0" y="3" width="6" height="1" fill="#7a5c00"/><rect x="1" y="3" width="4" height="1" fill="#c89c10"/><rect x="0" y="4" width="6" height="1" fill="#fce048"/><rect x="1" y="4" width="4" height="1" fill="#fff088"/><rect x="0" y="5" width="6" height="1" fill="#7a5c00"/><rect x="1" y="5" width="4" height="1" fill="#c89c10"/><rect x="0" y="6" width="6" height="1" fill="#fce048"/><rect x="1" y="6" width="4" height="1" fill="#fff088"/><rect x="0" y="7" width="6" height="1" fill="#7a5c00"/><rect x="1" y="7" width="4" height="1" fill="#c89c10"/><rect x="0" y="8" width="6" height="1" fill="#5a4400"/></g></svg><svg class="a" style="left:295px;top:73px" width="16" height="16" shape-rendering="crispEdges"><g transform="translate(1,1)"><rect x="0" y="3" width="3" height="10" fill="#e8881c"/><rect x="1" y="2" width="2" height="1" fill="#e8881c"/><rect x="2" y="1" width="1" height="1" fill="#e8881c"/><rect x="0" y="4" width="3" height="1" fill="#d06c08"/><rect x="0" y="6" width="3" height="1" fill="#d06c08"/><rect x="0" y="8" width="3" height="1" fill="#d06c08"/><rect x="0" y="10" width="3" height="1" fill="#d06c08"/><rect x="0" y="12" width="3" height="1" fill="#d06c08"/><rect x="3" y="2" width="5" height="11" fill="#fcdc20"/><rect x="4" y="1" width="4" height="1" fill="#fcdc20"/><rect x="5" y="0" width="2" height="1" fill="#fce860"/><rect x="8" y="3" width="1" height="10" fill="#e0a818"/><rect x="3" y="12" width="5" height="1" fill="#e8b818"/></g><rect x="8" y="3" width="1" height="9" fill="#707880"/><rect x="10" y="1" width="1" height="11" fill="#707880"/><rect x="12" y="4" width="1" height="8" fill="#707880"/><rect x="9" y="5" width="1" height="7" fill="#b0b8c0"/><rect x="11" y="3" width="1" height="9" fill="#b0b8c0"/><rect x="1" y="12" width="13" height="1" fill="#606870"/><rect x="1" y="13" width="13" height="2" fill="#98a0a8"/><rect x="2" y="13" width="1" height="2" fill="#50585f"/><rect x="4" y="13" width="1" height="2" fill="#50585f"/><rect x="6" y="13" width="1" height="2" fill="#50585f"/><rect x="8" y="13" width="1" height="2" fill="#50585f"/><rect x="10" y="13" width="1" height="2" fill="#50585f"/><rect x="12" y="13" width="1" height="2" fill="#50585f"/></svg><svg class="a" style="left:318px;top:73px" width="16" height="16" shape-rendering="crispEdges"><g transform="translate(0,0)"><rect x="0" y="3" width="3" height="10" fill="#e8881c"/><rect x="1" y="2" width="2" height="1" fill="#e8881c"/><rect x="2" y="1" width="1" height="1" fill="#e8881c"/><rect x="0" y="4" width="3" height="1" fill="#d06c08"/><rect x="0" y="6" width="3" height="1" fill="#d06c08"/><rect x="0" y="8" width="3" height="1" fill="#d06c08"/><rect x="0" y="10" width="3" height="1" fill="#d06c08"/><rect x="0" y="12" width="3" height="1" fill="#d06c08"/><rect x="3" y="2" width="5" height="11" fill="#fcdc20"/><rect x="4" y="1" width="4" height="1" fill="#fcdc20"/><rect x="5" y="0" width="2" height="1" fill="#fce860"/><rect x="8" y="3" width="1" height="10" fill="#e0a818"/><rect x="3" y="12" width="5" height="1" fill="#e8b818"/></g><rect x="6" y="11" width="9" height="1" fill="#a0a8b0"/><rect x="6" y="12" width="9" height="2" fill="#505860"/><rect x="13" y="10" width="2" height="2" fill="#505860"/><rect x="7" y="12" width="1" height="1" fill="#c0c8d0"/><rect x="9" y="12" width="1" height="1" fill="#c0c8d0"/><rect x="11" y="12" width="1" height="1" fill="#c0c8d0"/></svg><svg class="a" style="left:341px;top:73px" width="16" height="16" shape-rendering="crispEdges"><g transform="translate(0,1)"><rect x="0" y="3" width="3" height="10" fill="#e8881c"/><rect x="1" y="2" width="2" height="1" fill="#e8881c"/><rect x="2" y="1" width="1" height="1" fill="#e8881c"/><rect x="0" y="4" width="3" height="1" fill="#d06c08"/><rect x="0" y="6" width="3" height="1" fill="#d06c08"/><rect x="0" y="8" width="3" height="1" fill="#d06c08"/><rect x="0" y="10" width="3" height="1" fill="#d06c08"/><rect x="0" y="12" width="3" height="1" fill="#d06c08"/><rect x="3" y="2" width="5" height="11" fill="#fcdc20"/><rect x="4" y="1" width="4" height="1" fill="#fcdc20"/><rect x="5" y="0" width="2" height="1" fill="#fce860"/><rect x="8" y="3" width="1" height="10" fill="#e0a818"/><rect x="3" y="12" width="5" height="1" fill="#e8b818"/></g><g transform="translate(4,7)"><rect x="0" y="0" width="6" height="1" fill="#fce048"/><rect x="1" y="0" width="4" height="1" fill="#fff088"/><rect x="0" y="1" width="6" height="1" fill="#7a5c00"/><rect x="1" y="1" width="4" height="1" fill="#c89c10"/><rect x="0" y="2" width="6" height="1" fill="#fce048"/><rect x="1" y="2" width="4" height="1" fill="#fff088"/><rect x="0" y="3" width="6" height="1" fill="#7a5c00"/><rect x="1" y="3" width="4" height="1" fill="#c89c10"/><rect x="0" y="4" width="6" height="1" fill="#fce048"/><rect x="1" y="4" width="4" height="1" fill="#fff088"/><rect x="0" y="5" width="6" height="1" fill="#7a5c00"/><rect x="1" y="5" width="4" height="1" fill="#c89c10"/><rect x="0" y="6" width="6" height="1" fill="#fce048"/><rect x="1" y="6" width="4" height="1" fill="#fff088"/><rect x="0" y="7" width="6" height="1" fill="#7a5c00"/><rect x="1" y="7" width="4" height="1" fill="#c89c10"/><rect x="0" y="8" width="6" height="1" fill="#5a4400"/></g><g transform="translate(10,12)"><rect x="0" y="0" width="5" height="1" fill="#fce048"/><rect x="1" y="0" width="3" height="1" fill="#fff088"/><rect x="0" y="1" width="5" height="1" fill="#7a5c00"/><rect x="1" y="1" width="3" height="1" fill="#c89c10"/><rect x="0" y="2" width="5" height="1" fill="#5a4400"/></g></svg><svg class="a" style="left:360px;top:71px" width="2" height="20" shape-rendering="crispEdges"><rect x="0" y="0" width="1" height="20" fill="#d0c8bc"/><rect x="1" y="0" width="1" height="20" fill="#fdfaf4"/></svg><svg class="a" style="left:368px;top:73px" width="17" height="17" shape-rendering="crispEdges"><g transform="translate(0,0)"><rect x="0" y="0" width="8" height="13" fill="#4c94c4"/><rect x="8" y="2" width="2" height="11" fill="#4c94c4"/><rect x="1" y="1" width="7" height="11" fill="#e8f6ff"/><rect x="8" y="3" width="1" height="9" fill="#e8f6ff"/><rect x="7" y="1" width="1" height="2" fill="#4c94c4"/><rect x="2" y="6" width="6" height="1" fill="#40b8d8"/><rect x="2" y="8" width="6" height="1" fill="#40b8d8"/><rect x="2" y="10" width="6" height="1" fill="#40b8d8"/></g><g transform="translate(7,1)"><rect x="3" y="0" width="3" height="1" fill="#2a160c"/><rect x="2" y="1" width="1" height="3" fill="#2a160c"/><rect x="6" y="1" width="1" height="3" fill="#2a160c"/><rect x="3" y="1" width="3" height="3" fill="#f6c4a0"/><rect x="3" y="4" width="3" height="1" fill="#7a3c28"/><rect x="2" y="5" width="5" height="1" fill="#3058d0"/><rect x="0" y="6" width="9" height="4" fill="#3058d0"/><rect x="1" y="5" width="1" height="1" fill="#1830a0"/><rect x="7" y="5" width="1" height="1" fill="#1830a0"/><rect x="0" y="6" width="1" height="4" fill="#1830a0"/><rect x="8" y="6" width="1" height="4" fill="#1830a0"/><rect x="0" y="9" width="9" height="1" fill="#1830a0"/><rect x="4" y="5" width="1" height="2" fill="#fff"/><rect x="3" y="5" width="1" height="1" fill="#fff"/><rect x="5" y="5" width="1" height="1" fill="#fff"/></g><g transform="translate(2,11)"><rect x="0" y="0" width="11" height="1" fill="#1c2420"/><rect x="1" y="1" width="9" height="1" fill="#1c2420"/><rect x="2" y="2" width="7" height="1" fill="#1c2420"/><rect x="3" y="3" width="5" height="1" fill="#1c2420"/><rect x="2" y="1" width="1" height="1" fill="#fff"/><rect x="4" y="1" width="1" height="1" fill="#fff"/><rect x="6" y="1" width="1" height="1" fill="#fff"/><rect x="8" y="1" width="1" height="1" fill="#fff"/><rect x="3" y="2" width="1" height="1" fill="#fff"/><rect x="5" y="2" width="1" height="1" fill="#fff"/><rect x="7" y="2" width="1" height="1" fill="#fff"/><rect x="3" y="4" width="2" height="1" fill="#1c2420"/><rect x="6" y="4" width="2" height="1" fill="#1c2420"/></g></svg><svg class="a" style="left:391px;top:73px" width="16" height="16" shape-rendering="crispEdges"><g transform="translate(0,0)"><rect x="0" y="0" width="8" height="3" fill="#2c1ca4"/><rect x="1" y="1" width="1" height="1" fill="#fff"/><rect x="3" y="1" width="1" height="1" fill="#fff"/><rect x="5" y="1" width="1" height="1" fill="#fff"/><rect x="7" y="0" width="2" height="2" fill="#000"/><rect x="1" y="3" width="6" height="1" fill="#00000030"/></g><g transform="translate(3,4)"><g shape-rendering="auto"><path d="M7.5 0.5v7h-7z" fill="#94dc30" stroke="#1c4c0c" stroke-width="1"/><path d="M0.5 0.5l4.5 4.5" stroke="#1c4c0c" stroke-width="1.8"/><path d="M2 1l4 4" stroke="#58a020" stroke-width="1"/></g></g><g transform="translate(10,10)"><rect x="0" y="1" width="5" height="5" fill="#e01828"/><rect x="1" y="0" width="5" height="1" fill="#f05058"/><rect x="5" y="1" width="1" height="5" fill="#a00c18"/><rect x="0" y="0" width="1" height="1" fill="#f05058"/></g></svg><svg class="a" style="left:414px;top:73px" width="17" height="17" shape-rendering="crispEdges"><g transform="translate(0,0)"><rect x="0" y="0" width="8" height="13" fill="#4c94c4"/><rect x="8" y="2" width="2" height="11" fill="#4c94c4"/><rect x="1" y="1" width="7" height="11" fill="#e8f6ff"/><rect x="8" y="3" width="1" height="9" fill="#e8f6ff"/><rect x="7" y="1" width="1" height="2" fill="#4c94c4"/><rect x="2" y="6" width="6" height="1" fill="#40b8d8"/><rect x="2" y="8" width="6" height="1" fill="#40b8d8"/><rect x="2" y="10" width="6" height="1" fill="#40b8d8"/></g><g transform="translate(7,1)"><rect x="3" y="0" width="3" height="1" fill="#2a160c"/><rect x="2" y="1" width="1" height="3" fill="#2a160c"/><rect x="6" y="1" width="1" height="3" fill="#2a160c"/><rect x="3" y="1" width="3" height="3" fill="#f6c4a0"/><rect x="3" y="4" width="3" height="1" fill="#7a3c28"/><rect x="2" y="5" width="5" height="1" fill="#e0585c"/><rect x="0" y="6" width="9" height="4" fill="#e0585c"/><rect x="1" y="5" width="1" height="1" fill="#a83038"/><rect x="7" y="5" width="1" height="1" fill="#a83038"/><rect x="0" y="6" width="1" height="4" fill="#a83038"/><rect x="8" y="6" width="1" height="4" fill="#a83038"/><rect x="0" y="9" width="9" height="1" fill="#a83038"/><rect x="4" y="5" width="1" height="2" fill="#fff"/><rect x="3" y="5" width="1" height="1" fill="#fff"/><rect x="5" y="5" width="1" height="1" fill="#fff"/></g><g transform="translate(2,11)"><rect x="0" y="0" width="11" height="1" fill="#1c2420"/><rect x="1" y="1" width="9" height="1" fill="#1c2420"/><rect x="2" y="2" width="7" height="1" fill="#1c2420"/><rect x="3" y="3" width="5" height="1" fill="#1c2420"/><rect x="2" y="1" width="1" height="1" fill="#fff"/><rect x="4" y="1" width="1" height="1" fill="#fff"/><rect x="6" y="1" width="1" height="1" fill="#fff"/><rect x="8" y="1" width="1" height="1" fill="#fff"/><rect x="3" y="2" width="1" height="1" fill="#fff"/><rect x="5" y="2" width="1" height="1" fill="#fff"/><rect x="7" y="2" width="1" height="1" fill="#fff"/><rect x="3" y="4" width="2" height="1" fill="#1c2420"/><rect x="6" y="4" width="2" height="1" fill="#1c2420"/></g></svg><svg class="a" style="left:437px;top:73px" width="16" height="16" shape-rendering="crispEdges"><g transform="translate(0,0)"><rect x="0" y="1" width="5" height="5" fill="#e01828"/><rect x="1" y="0" width="5" height="1" fill="#f05058"/><rect x="5" y="1" width="1" height="5" fill="#a00c18"/><rect x="0" y="0" width="1" height="1" fill="#f05058"/></g><g transform="translate(5,4)"><g shape-rendering="auto"><path d="M7.5 0.5v7h-7z" fill="#94dc30" stroke="#1c4c0c" stroke-width="1"/><path d="M0.5 0.5l4.5 4.5" stroke="#1c4c0c" stroke-width="1.8"/><path d="M2 1l4 4" stroke="#58a020" stroke-width="1"/></g></g><g transform="translate(7,12)"><rect x="0" y="0" width="8" height="3" fill="#2c1ca4"/><rect x="1" y="1" width="1" height="1" fill="#fff"/><rect x="3" y="1" width="1" height="1" fill="#fff"/><rect x="5" y="1" width="1" height="1" fill="#fff"/><rect x="7" y="0" width="2" height="2" fill="#000"/><rect x="1" y="3" width="6" height="1" fill="#00000030"/></g></svg><svg class="a" style="left:460px;top:73px" width="16" height="16" shape-rendering="crispEdges"><g transform="translate(0,0)"><rect x="0" y="1" width="5" height="5" fill="#e01828"/><rect x="1" y="0" width="5" height="1" fill="#f05058"/><rect x="5" y="1" width="1" height="5" fill="#a00c18"/><rect x="0" y="0" width="1" height="1" fill="#f05058"/></g><g transform="translate(5,4)"><g shape-rendering="auto"><path d="M7.5 0.5v7h-7z" fill="#94dc30" stroke="#1c4c0c" stroke-width="1"/><path d="M0.5 0.5l4.5 4.5" stroke="#1c4c0c" stroke-width="1.8"/><path d="M2 1l4 4" stroke="#58a020" stroke-width="1"/></g></g><g transform="translate(7,12)"><rect x="0" y="0" width="8" height="3" fill="#4890e0"/><rect x="1" y="1" width="1" height="1" fill="#fff"/><rect x="3" y="1" width="1" height="1" fill="#fff"/><rect x="5" y="1" width="1" height="1" fill="#fff"/><rect x="7" y="0" width="2" height="2" fill="#1850a0"/><rect x="1" y="3" width="6" height="1" fill="#00000030"/></g></svg><svg class="a" style="left:485px;top:73px" width="16" height="16" shape-rendering="crispEdges"><g transform="translate(0,4)"><rect x="0" y="0" width="6" height="1" fill="#fce048"/><rect x="1" y="0" width="4" height="1" fill="#fff088"/><rect x="0" y="1" width="6" height="1" fill="#7a5c00"/><rect x="1" y="1" width="4" height="1" fill="#c89c10"/><rect x="0" y="2" width="6" height="1" fill="#fce048"/><rect x="1" y="2" width="4" height="1" fill="#fff088"/><rect x="0" y="3" width="6" height="1" fill="#7a5c00"/><rect x="1" y="3" width="4" height="1" fill="#c89c10"/><rect x="0" y="4" width="6" height="1" fill="#fce048"/><rect x="1" y="4" width="4" height="1" fill="#fff088"/><rect x="0" y="5" width="6" height="1" fill="#7a5c00"/><rect x="1" y="5" width="4" height="1" fill="#c89c10"/><rect x="0" y="6" width="6" height="1" fill="#fce048"/><rect x="1" y="6" width="4" height="1" fill="#fff088"/><rect x="0" y="7" width="6" height="1" fill="#7a5c00"/><rect x="1" y="7" width="4" height="1" fill="#c89c10"/><rect x="0" y="8" width="6" height="1" fill="#fce048"/><rect x="1" y="8" width="4" height="1" fill="#fff088"/><rect x="0" y="9" width="6" height="1" fill="#7a5c00"/><rect x="1" y="9" width="4" height="1" fill="#c89c10"/><rect x="0" y="10" width="6" height="1" fill="#5a4400"/></g><g transform="translate(7,9)"><rect x="0" y="0" width="6" height="1" fill="#fce048"/><rect x="1" y="0" width="4" height="1" fill="#fff088"/><rect x="0" y="1" width="6" height="1" fill="#7a5c00"/><rect x="1" y="1" width="4" height="1" fill="#c89c10"/><rect x="0" y="2" width="6" height="1" fill="#fce048"/><rect x="1" y="2" width="4" height="1" fill="#fff088"/><rect x="0" y="3" width="6" height="1" fill="#7a5c00"/><rect x="1" y="3" width="4" height="1" fill="#c89c10"/><rect x="0" y="4" width="6" height="1" fill="#fce048"/><rect x="1" y="4" width="4" height="1" fill="#fff088"/><rect x="0" y="5" width="6" height="1" fill="#7a5c00"/><rect x="1" y="5" width="4" height="1" fill="#c89c10"/><rect x="0" y="6" width="6" height="1" fill="#5a4400"/></g><path d="M3 3c2-3 6-3 8 1" fill="none" stroke="#283850" stroke-width="1.3" shape-rendering="auto"/><path d="M9 4h4v-3z" fill="#283850" shape-rendering="auto"/></svg><svg class="a" style="left:506px;top:73px" width="16" height="16" shape-rendering="crispEdges"><g transform="translate(0,0)"><rect x="0" y="0" width="8" height="13" fill="#b0b0b0"/><rect x="8" y="2" width="2" height="11" fill="#b0b0b0"/><rect x="1" y="1" width="7" height="11" fill="#fafafa"/><rect x="8" y="3" width="1" height="9" fill="#fafafa"/><rect x="7" y="1" width="1" height="2" fill="#b0b0b0"/><rect x="2" y="4" width="6" height="1" fill="#dcdcdc"/><rect x="2" y="6" width="6" height="1" fill="#dcdcdc"/></g><path d="M4 15l4-6h8v6z" fill="#30a030" shape-rendering="auto"/><rect x="8" y="10" width="7" height="4" fill="#68c868"/><rect x="10" y="10" width="3" height="4" fill="#f0d040"/><rect x="10" y="11" width="3" height="1" fill="#806000"/></svg><svg class="a" style="left:529px;top:73px" width="16" height="16" shape-rendering="crispEdges"><g transform="translate(0,0)"><rect x="0" y="0" width="8" height="3" fill="#2c1ca4"/><rect x="1" y="1" width="1" height="1" fill="#fff"/><rect x="3" y="1" width="1" height="1" fill="#fff"/><rect x="5" y="1" width="1" height="1" fill="#fff"/><rect x="7" y="0" width="2" height="2" fill="#000"/><rect x="1" y="3" width="6" height="1" fill="#00000030"/></g><g transform="translate(4,4)"><g shape-rendering="auto"><path d="M7.5 0.5v7h-7z" fill="#94dc30" stroke="#1c4c0c" stroke-width="1"/><path d="M0.5 0.5l4.5 4.5" stroke="#1c4c0c" stroke-width="1.8"/><path d="M2 1l4 4" stroke="#58a020" stroke-width="1"/></g></g><g transform="translate(6,12)"><rect x="0" y="0" width="8" height="3" fill="#f08828"/><rect x="1" y="1" width="1" height="1" fill="#ffe0b0"/><rect x="3" y="1" width="1" height="1" fill="#ffe0b0"/><rect x="5" y="1" width="1" height="1" fill="#ffe0b0"/><rect x="7" y="0" width="2" height="2" fill="#a04808"/><rect x="1" y="3" width="6" height="1" fill="#00000030"/></g></svg><svg class="a" style="left:552px;top:73px" width="16" height="16" shape-rendering="crispEdges"><g transform="translate(0,0)"><rect x="0" y="0" width="10" height="14" fill="#4c94c4"/><rect x="10" y="2" width="2" height="12" fill="#4c94c4"/><rect x="1" y="1" width="9" height="12" fill="#e8f6ff"/><rect x="10" y="3" width="1" height="10" fill="#e8f6ff"/><rect x="9" y="1" width="1" height="2" fill="#4c94c4"/><rect x="2" y="5" width="8" height="1" fill="#40b8d8"/><rect x="2" y="7" width="8" height="1" fill="#40b8d8"/><rect x="2" y="9" width="8" height="1" fill="#40b8d8"/></g><path d="M6 5c3-2 6-1 7 3" fill="none" stroke="#203048" stroke-width="1.2" shape-rendering="auto"/><path d="M11 7h4l-2 3z" fill="#203048" shape-rendering="auto"/><g transform="translate(10,9)"><rect x="0" y="0" width="6" height="1" fill="#fce048"/><rect x="1" y="0" width="4" height="1" fill="#fff088"/><rect x="0" y="1" width="6" height="1" fill="#7a5c00"/><rect x="1" y="1" width="4" height="1" fill="#c89c10"/><rect x="0" y="2" width="6" height="1" fill="#fce048"/><rect x="1" y="2" width="4" height="1" fill="#fff088"/><rect x="0" y="3" width="6" height="1" fill="#7a5c00"/><rect x="1" y="3" width="4" height="1" fill="#c89c10"/><rect x="0" y="4" width="6" height="1" fill="#fce048"/><rect x="1" y="4" width="4" height="1" fill="#fff088"/><rect x="0" y="5" width="6" height="1" fill="#7a5c00"/><rect x="1" y="5" width="4" height="1" fill="#c89c10"/><rect x="0" y="6" width="6" height="1" fill="#5a4400"/></g></svg><svg class="a" style="left:575px;top:73px" width="16" height="16" shape-rendering="crispEdges"><g transform="translate(4,1)"><rect x="0" y="0" width="10" height="13" fill="#4c94c4"/><rect x="10" y="2" width="2" height="11" fill="#4c94c4"/><rect x="1" y="1" width="9" height="11" fill="#e8f6ff"/><rect x="10" y="3" width="1" height="9" fill="#e8f6ff"/><rect x="9" y="1" width="1" height="2" fill="#4c94c4"/><rect x="2" y="5" width="8" height="1" fill="#40b8d8"/><rect x="2" y="7" width="8" height="1" fill="#40b8d8"/><rect x="2" y="9" width="8" height="1" fill="#40b8d8"/></g><g transform="translate(0,0)"><rect x="0" y="0" width="6" height="1" fill="#fce048"/><rect x="1" y="0" width="4" height="1" fill="#fff088"/><rect x="0" y="1" width="6" height="1" fill="#7a5c00"/><rect x="1" y="1" width="4" height="1" fill="#c89c10"/><rect x="0" y="2" width="6" height="1" fill="#fce048"/><rect x="1" y="2" width="4" height="1" fill="#fff088"/><rect x="0" y="3" width="6" height="1" fill="#7a5c00"/><rect x="1" y="3" width="4" height="1" fill="#c89c10"/><rect x="0" y="4" width="6" height="1" fill="#fce048"/><rect x="1" y="4" width="4" height="1" fill="#fff088"/><rect x="0" y="5" width="6" height="1" fill="#7a5c00"/><rect x="1" y="5" width="4" height="1" fill="#c89c10"/><rect x="0" y="6" width="6" height="1" fill="#5a4400"/></g><path d="M9 13c-4 1-7-1-8-4" fill="none" stroke="#203048" stroke-width="1.2" shape-rendering="auto"/><path d="M0 8l4 1l-3 3z" fill="#203048" shape-rendering="auto"/></svg><svg class="a" style="left:598px;top:73px" width="16" height="16" shape-rendering="crispEdges"><path d="M4 16l5-8h7v8z" fill="#b8b0a8" shape-rendering="auto"/><rect x="3" y="0" width="3" height="9" fill="#30b830"/><rect x="0" y="3" width="9" height="3" fill="#30b830"/><rect x="4" y="1" width="1" height="7" fill="#70e060"/><rect x="1" y="4" width="7" height="1" fill="#70e060"/><g transform="translate(8,6)"><rect x="0" y="0" width="6" height="1" fill="#fce048"/><rect x="1" y="0" width="4" height="1" fill="#fff088"/><rect x="0" y="1" width="6" height="1" fill="#7a5c00"/><rect x="1" y="1" width="4" height="1" fill="#c89c10"/><rect x="0" y="2" width="6" height="1" fill="#fce048"/><rect x="1" y="2" width="4" height="1" fill="#fff088"/><rect x="0" y="3" width="6" height="1" fill="#7a5c00"/><rect x="1" y="3" width="4" height="1" fill="#c89c10"/><rect x="0" y="4" width="6" height="1" fill="#fce048"/><rect x="1" y="4" width="4" height="1" fill="#fff088"/><rect x="0" y="5" width="6" height="1" fill="#7a5c00"/><rect x="1" y="5" width="4" height="1" fill="#c89c10"/><rect x="0" y="6" width="6" height="1" fill="#fce048"/><rect x="1" y="6" width="4" height="1" fill="#fff088"/><rect x="0" y="7" width="6" height="1" fill="#7a5c00"/><rect x="1" y="7" width="4" height="1" fill="#c89c10"/><rect x="0" y="8" width="6" height="1" fill="#5a4400"/></g></svg><svg class="a" style="left:621px;top:73px" width="16" height="16" shape-rendering="crispEdges"><path d="M4 16l5-8h7v8z" fill="#b8b0a8" shape-rendering="auto"/><rect x="0" y="3" width="9" height="3" fill="#30b830"/><rect x="1" y="4" width="7" height="1" fill="#70e060"/><g transform="translate(8,5)"><rect x="0" y="0" width="6" height="1" fill="#fce048"/><rect x="1" y="0" width="4" height="1" fill="#fff088"/><rect x="0" y="1" width="6" height="1" fill="#7a5c00"/><rect x="1" y="1" width="4" height="1" fill="#c89c10"/><rect x="0" y="2" width="6" height="1" fill="#fce048"/><rect x="1" y="2" width="4" height="1" fill="#fff088"/><rect x="0" y="3" width="6" height="1" fill="#7a5c00"/><rect x="1" y="3" width="4" height="1" fill="#c89c10"/><rect x="0" y="4" width="6" height="1" fill="#fce048"/><rect x="1" y="4" width="4" height="1" fill="#fff088"/><rect x="0" y="5" width="6" height="1" fill="#7a5c00"/><rect x="1" y="5" width="4" height="1" fill="#c89c10"/><rect x="0" y="6" width="6" height="1" fill="#fce048"/><rect x="1" y="6" width="4" height="1" fill="#fff088"/><rect x="0" y="7" width="6" height="1" fill="#7a5c00"/><rect x="1" y="7" width="4" height="1" fill="#c89c10"/><rect x="0" y="8" width="6" height="1" fill="#fce048"/><rect x="1" y="8" width="4" height="1" fill="#fff088"/><rect x="0" y="9" width="6" height="1" fill="#7a5c00"/><rect x="1" y="9" width="4" height="1" fill="#c89c10"/><rect x="0" y="10" width="6" height="1" fill="#5a4400"/></g></svg><svg class="a" style="left:644px;top:73px" width="16" height="16" shape-rendering="crispEdges"><g transform="translate(0,0)"><rect x="0" y="0" width="9" height="12" fill="#4c94c4"/><rect x="9" y="2" width="2" height="10" fill="#4c94c4"/><rect x="1" y="1" width="8" height="10" fill="#e8f6ff"/><rect x="9" y="3" width="1" height="8" fill="#e8f6ff"/><rect x="8" y="1" width="1" height="2" fill="#4c94c4"/><rect x="2" y="4" width="7" height="1" fill="#40b8d8"/><rect x="2" y="6" width="7" height="1" fill="#40b8d8"/></g><g transform="translate(0,11)"><rect x="0" y="0" width="6" height="1" fill="#fce048"/><rect x="1" y="0" width="4" height="1" fill="#fff088"/><rect x="0" y="1" width="6" height="1" fill="#7a5c00"/><rect x="1" y="1" width="4" height="1" fill="#c89c10"/><rect x="0" y="2" width="6" height="1" fill="#fce048"/><rect x="1" y="2" width="4" height="1" fill="#fff088"/><rect x="0" y="3" width="6" height="1" fill="#7a5c00"/><rect x="1" y="3" width="4" height="1" fill="#c89c10"/><rect x="0" y="4" width="6" height="1" fill="#5a4400"/></g><g transform="translate(7,5)"><path d="M0 4l2-1.5l2 2.5l4-5l1.5 1l-5.5 7.5z" fill="#18a830" shape-rendering="auto"/></g></svg><svg class="a" style="left:667px;top:73px" width="16" height="16" shape-rendering="crispEdges"><g transform="translate(0,0)"><rect x="0" y="0" width="9" height="13" fill="#4c94c4"/><rect x="9" y="2" width="2" height="11" fill="#4c94c4"/><rect x="1" y="1" width="8" height="11" fill="#e8f6ff"/><rect x="9" y="3" width="1" height="9" fill="#e8f6ff"/><rect x="8" y="1" width="1" height="2" fill="#4c94c4"/><rect x="2" y="4" width="7" height="1" fill="#40b8d8"/></g><g transform="translate(3,4)"><rect x="0" y="0" width="6" height="1" fill="#fce048"/><rect x="1" y="0" width="4" height="1" fill="#fff088"/><rect x="0" y="1" width="6" height="1" fill="#7a5c00"/><rect x="1" y="1" width="4" height="1" fill="#c89c10"/><rect x="0" y="2" width="6" height="1" fill="#fce048"/><rect x="1" y="2" width="4" height="1" fill="#fff088"/><rect x="0" y="3" width="6" height="1" fill="#7a5c00"/><rect x="1" y="3" width="4" height="1" fill="#c89c10"/><rect x="0" y="4" width="6" height="1" fill="#fce048"/><rect x="1" y="4" width="4" height="1" fill="#fff088"/><rect x="0" y="5" width="6" height="1" fill="#7a5c00"/><rect x="1" y="5" width="4" height="1" fill="#c89c10"/><rect x="0" y="6" width="6" height="1" fill="#fce048"/><rect x="1" y="6" width="4" height="1" fill="#fff088"/><rect x="0" y="7" width="6" height="1" fill="#7a5c00"/><rect x="1" y="7" width="4" height="1" fill="#c89c10"/><rect x="0" y="8" width="6" height="1" fill="#fce048"/><rect x="1" y="8" width="4" height="1" fill="#fff088"/><rect x="0" y="9" width="6" height="1" fill="#7a5c00"/><rect x="1" y="9" width="4" height="1" fill="#c89c10"/><rect x="0" y="10" width="6" height="1" fill="#5a4400"/></g><g transform="translate(10,10)"><rect x="0" y="0" width="6" height="1" fill="#fce048"/><rect x="1" y="0" width="4" height="1" fill="#fff088"/><rect x="0" y="1" width="6" height="1" fill="#7a5c00"/><rect x="1" y="1" width="4" height="1" fill="#c89c10"/><rect x="0" y="2" width="6" height="1" fill="#fce048"/><rect x="1" y="2" width="4" height="1" fill="#fff088"/><rect x="0" y="3" width="6" height="1" fill="#7a5c00"/><rect x="1" y="3" width="4" height="1" fill="#c89c10"/><rect x="0" y="4" width="6" height="1" fill="#5a4400"/></g></svg><svg class="a" style="left:690px;top:73px" width="16" height="16" shape-rendering="crispEdges"><g transform="translate(0,0)"><rect x="0" y="0" width="9" height="13" fill="#4c94c4"/><rect x="9" y="2" width="2" height="11" fill="#4c94c4"/><rect x="1" y="1" width="8" height="11" fill="#e8f6ff"/><rect x="9" y="3" width="1" height="9" fill="#e8f6ff"/><rect x="8" y="1" width="1" height="2" fill="#4c94c4"/><rect x="2" y="4" width="7" height="1" fill="#40b8d8"/><rect x="2" y="6" width="7" height="1" fill="#40b8d8"/></g><path d="M7 15l8-8" stroke="#28a028" stroke-width="2" shape-rendering="auto"/><circle cx="8.5" cy="9" r="1.8" fill="#28a028" shape-rendering="auto"/><circle cx="14" cy="14" r="1.8" fill="#28a028" shape-rendering="auto"/></svg><svg class="a" style="left:713px;top:73px" width="17" height="17" shape-rendering="crispEdges"><g transform="translate(0,0)"><rect x="0" y="0" width="8" height="12" fill="#4c94c4"/><rect x="8" y="2" width="2" height="10" fill="#4c94c4"/><rect x="1" y="1" width="7" height="10" fill="#e8f6ff"/><rect x="8" y="3" width="1" height="8" fill="#e8f6ff"/><rect x="7" y="1" width="1" height="2" fill="#4c94c4"/><rect x="2" y="4" width="6" height="1" fill="#40b8d8"/><rect x="2" y="6" width="6" height="1" fill="#40b8d8"/></g><g transform="translate(8,2)"><rect x="3" y="0" width="3" height="1" fill="#2a160c"/><rect x="2" y="1" width="1" height="3" fill="#2a160c"/><rect x="6" y="1" width="1" height="3" fill="#2a160c"/><rect x="3" y="1" width="3" height="3" fill="#f6c4a0"/><rect x="3" y="4" width="3" height="1" fill="#7a3c28"/><rect x="2" y="5" width="5" height="1" fill="#e03840"/><rect x="0" y="6" width="9" height="4" fill="#e03840"/><rect x="1" y="5" width="1" height="1" fill="#a01820"/><rect x="7" y="5" width="1" height="1" fill="#a01820"/><rect x="0" y="6" width="1" height="4" fill="#a01820"/><rect x="8" y="6" width="1" height="4" fill="#a01820"/><rect x="0" y="9" width="9" height="1" fill="#a01820"/><rect x="4" y="5" width="1" height="2" fill="#fff"/><rect x="3" y="5" width="1" height="1" fill="#fff"/><rect x="5" y="5" width="1" height="1" fill="#fff"/></g><g transform="translate(4,6)"><rect x="3" y="0" width="3" height="1" fill="#2a160c"/><rect x="2" y="1" width="1" height="3" fill="#2a160c"/><rect x="6" y="1" width="1" height="3" fill="#2a160c"/><rect x="3" y="1" width="3" height="3" fill="#f6c4a0"/><rect x="3" y="4" width="3" height="1" fill="#7a3c28"/><rect x="2" y="5" width="5" height="1" fill="#3058d0"/><rect x="0" y="6" width="9" height="4" fill="#3058d0"/><rect x="1" y="5" width="1" height="1" fill="#1830a0"/><rect x="7" y="5" width="1" height="1" fill="#1830a0"/><rect x="0" y="6" width="1" height="4" fill="#1830a0"/><rect x="8" y="6" width="1" height="4" fill="#1830a0"/><rect x="0" y="9" width="9" height="1" fill="#1830a0"/><rect x="4" y="5" width="1" height="2" fill="#fff"/><rect x="3" y="5" width="1" height="1" fill="#fff"/><rect x="5" y="5" width="1" height="1" fill="#fff"/></g></svg><svg class="a" style="left:738px;top:73px" width="16" height="16" shape-rendering="crispEdges"><rect x="0.5" y="0.5" width="12" height="15" rx="2" fill="#38c048" stroke="#188828" shape-rendering="auto"/><rect x="3" y="3" width="3" height="2" fill="#106020"/><rect x="4" y="5" width="1" height="8" fill="#106020"/><rect x="4" y="7" width="4" height="1" fill="#106020"/><rect x="4" y="11" width="4" height="1" fill="#106020"/><rect x="7" y="6" width="3" height="3" fill="#80e890"/><rect x="7" y="10" width="3" height="3" fill="#80e890"/></svg><svg class="a" style="left:758px;top:86px" width="7" height="4" shape-rendering="crispEdges"><rect x="0" y="0" width="7" height="1" fill="#2a2008"/><rect x="1" y="1" width="5" height="1" fill="#2a2008"/><rect x="2" y="2" width="3" height="1" fill="#2a2008"/><rect x="3" y="3" width="1" height="1" fill="#2a2008"/></svg><svg class="a" style="left:774px;top:74px" width="3" height="14" shape-rendering="crispEdges"><rect x="0" y="0" width="3" height="1" fill="#b4aa9a"/><rect x="0" y="2" width="3" height="1" fill="#b4aa9a"/><rect x="0" y="4" width="3" height="1" fill="#b4aa9a"/><rect x="0" y="6" width="3" height="1" fill="#b4aa9a"/><rect x="0" y="8" width="3" height="1" fill="#b4aa9a"/><rect x="0" y="10" width="3" height="1" fill="#b4aa9a"/><rect x="0" y="12" width="3" height="1" fill="#b4aa9a"/></svg><svg class="a" style="left:783px;top:73px" width="17" height="17" shape-rendering="crispEdges"><g transform="translate(0,1)"><rect x="0" y="0" width="9" height="12" fill="#c8c8c8"/><rect x="9" y="2" width="1" height="10" fill="#b8b8b8"/><rect x="1" y="1" width="7" height="11" fill="#fff"/><rect x="8" y="3" width="1" height="9" fill="#fff"/><rect x="7" y="0" width="2" height="2" fill="#e8e8e8"/><rect x="0" y="12" width="10" height="1" fill="#686868"/><path d="M2 3h5v1h-4l2 2.5l-2 2.5h4v1h-5v-1l2-2.5l-2-2.5z" fill="#101018" /></g><g transform="translate(6,0)"><rect x="3" y="0" width="3" height="1" fill="#2a160c"/><rect x="2" y="1" width="1" height="3" fill="#2a160c"/><rect x="6" y="1" width="1" height="3" fill="#2a160c"/><rect x="3" y="1" width="3" height="3" fill="#f6c4a0"/><rect x="3" y="4" width="3" height="1" fill="#7a3c28"/><rect x="2" y="5" width="5" height="1" fill="#3058d0"/><rect x="0" y="6" width="9" height="4" fill="#3058d0"/><rect x="1" y="5" width="1" height="1" fill="#1830a0"/><rect x="7" y="5" width="1" height="1" fill="#1830a0"/><rect x="0" y="6" width="1" height="4" fill="#1830a0"/><rect x="8" y="6" width="1" height="4" fill="#1830a0"/><rect x="0" y="9" width="9" height="1" fill="#1830a0"/><rect x="4" y="5" width="1" height="2" fill="#fff"/><rect x="3" y="5" width="1" height="1" fill="#fff"/><rect x="5" y="5" width="1" height="1" fill="#fff"/></g><g transform="translate(9,9)"><rect x="0" y="1" width="5" height="5" fill="#e01828"/><rect x="1" y="0" width="5" height="1" fill="#f05058"/><rect x="5" y="1" width="1" height="5" fill="#a00c18"/><rect x="0" y="0" width="1" height="1" fill="#f05058"/></g></svg><svg class="a" style="left:806px;top:73px" width="17" height="17" shape-rendering="crispEdges"><g transform="translate(0,1)"><rect x="0" y="0" width="9" height="12" fill="#c8c8c8"/><rect x="9" y="2" width="1" height="10" fill="#b8b8b8"/><rect x="1" y="1" width="7" height="11" fill="#fff"/><rect x="8" y="3" width="1" height="9" fill="#fff"/><rect x="7" y="0" width="2" height="2" fill="#e8e8e8"/><rect x="0" y="12" width="10" height="1" fill="#686868"/><path d="M2 3h5v1h-4l2 2.5l-2 2.5h4v1h-5v-1l2-2.5l-2-2.5z" fill="#101018" /></g><g transform="translate(6,0)"><rect x="3" y="0" width="3" height="1" fill="#2a160c"/><rect x="2" y="1" width="1" height="3" fill="#2a160c"/><rect x="6" y="1" width="1" height="3" fill="#2a160c"/><rect x="3" y="1" width="3" height="3" fill="#f6c4a0"/><rect x="3" y="4" width="3" height="1" fill="#7a3c28"/><rect x="2" y="5" width="5" height="1" fill="#e04850"/><rect x="0" y="6" width="9" height="4" fill="#e04850"/><rect x="1" y="5" width="1" height="1" fill="#a02028"/><rect x="7" y="5" width="1" height="1" fill="#a02028"/><rect x="0" y="6" width="1" height="4" fill="#a02028"/><rect x="8" y="6" width="1" height="4" fill="#a02028"/><rect x="0" y="9" width="9" height="1" fill="#a02028"/><rect x="4" y="5" width="1" height="2" fill="#fff"/><rect x="3" y="5" width="1" height="1" fill="#fff"/><rect x="5" y="5" width="1" height="1" fill="#fff"/></g><g transform="translate(9,9)"><rect x="0" y="1" width="5" height="5" fill="#2040d0"/><rect x="1" y="0" width="5" height="1" fill="#5070f0"/><rect x="5" y="1" width="1" height="5" fill="#102090"/><rect x="0" y="0" width="1" height="1" fill="#5070f0"/></g></svg><svg class="a" style="left:829px;top:73px" width="17" height="17" shape-rendering="crispEdges"><g transform="translate(0,1)"><rect x="0" y="0" width="9" height="12" fill="#c8c8c8"/><rect x="9" y="2" width="1" height="10" fill="#b8b8b8"/><rect x="1" y="1" width="7" height="11" fill="#fff"/><rect x="8" y="3" width="1" height="9" fill="#fff"/><rect x="7" y="0" width="2" height="2" fill="#e8e8e8"/><rect x="0" y="12" width="10" height="1" fill="#686868"/><path d="M2 3h5v1h-4l2 2.5l-2 2.5h4v1h-5v-1l2-2.5l-2-2.5z" fill="#101018" /></g><g transform="translate(8,2)"><rect x="3" y="0" width="3" height="1" fill="#2a160c"/><rect x="2" y="1" width="1" height="3" fill="#2a160c"/><rect x="6" y="1" width="1" height="3" fill="#2a160c"/><rect x="3" y="1" width="3" height="3" fill="#f6c4a0"/><rect x="3" y="4" width="3" height="1" fill="#7a3c28"/><rect x="2" y="5" width="5" height="1" fill="#4080e0"/><rect x="0" y="6" width="9" height="4" fill="#4080e0"/><rect x="1" y="5" width="1" height="1" fill="#2050a0"/><rect x="7" y="5" width="1" height="1" fill="#2050a0"/><rect x="0" y="6" width="1" height="4" fill="#2050a0"/><rect x="8" y="6" width="1" height="4" fill="#2050a0"/><rect x="0" y="9" width="9" height="1" fill="#2050a0"/><rect x="4" y="5" width="1" height="2" fill="#fff"/><rect x="3" y="5" width="1" height="1" fill="#fff"/><rect x="5" y="5" width="1" height="1" fill="#fff"/></g><g transform="translate(3,6)"><rect x="3" y="0" width="3" height="1" fill="#2a160c"/><rect x="2" y="1" width="1" height="3" fill="#2a160c"/><rect x="6" y="1" width="1" height="3" fill="#2a160c"/><rect x="3" y="1" width="3" height="3" fill="#f6c4a0"/><rect x="3" y="4" width="3" height="1" fill="#7a3c28"/><rect x="2" y="5" width="5" height="1" fill="#e86068"/><rect x="0" y="6" width="9" height="4" fill="#e86068"/><rect x="1" y="5" width="1" height="1" fill="#b03038"/><rect x="7" y="5" width="1" height="1" fill="#b03038"/><rect x="0" y="6" width="1" height="4" fill="#b03038"/><rect x="8" y="6" width="1" height="4" fill="#b03038"/><rect x="0" y="9" width="9" height="1" fill="#b03038"/><rect x="4" y="5" width="1" height="2" fill="#fff"/><rect x="3" y="5" width="1" height="1" fill="#fff"/><rect x="5" y="5" width="1" height="1" fill="#fff"/></g></svg><svg class="a" style="left:852px;top:73px" width="16" height="16" shape-rendering="crispEdges"><g transform="translate(0,1)"><rect x="0" y="0" width="9" height="12" fill="#c8c8c8"/><rect x="9" y="2" width="1" height="10" fill="#b8b8b8"/><rect x="1" y="1" width="7" height="11" fill="#fff"/><rect x="8" y="3" width="1" height="9" fill="#fff"/><rect x="7" y="0" width="2" height="2" fill="#e8e8e8"/><rect x="0" y="12" width="10" height="1" fill="#686868"/><path d="M2 3h5v1h-4l2 2.5l-2 2.5h4v1h-5v-1l2-2.5l-2-2.5z" fill="#101018" /></g><g transform="translate(9,1)"><rect x="0" y="1" width="5" height="5" fill="#e01828"/><rect x="1" y="0" width="5" height="1" fill="#f05058"/><rect x="5" y="1" width="1" height="5" fill="#a00c18"/><rect x="0" y="0" width="1" height="1" fill="#f05058"/></g><rect x="8" y="1" width="1" height="10" fill="#606060"/><g transform="translate(5,11)"><rect x="0" y="0" width="8" height="3" fill="#1c1ca0"/><rect x="1" y="1" width="1" height="1" fill="#fff"/><rect x="3" y="1" width="1" height="1" fill="#fff"/><rect x="5" y="1" width="1" height="1" fill="#fff"/><rect x="7" y="0" width="2" height="2" fill="#000"/><rect x="1" y="3" width="6" height="1" fill="#00000030"/></g></svg><svg class="a" style="left:875px;top:73px" width="16" height="16" shape-rendering="crispEdges"><g transform="translate(0,1)"><rect x="0" y="0" width="9" height="12" fill="#c8c8c8"/><rect x="9" y="2" width="1" height="10" fill="#b8b8b8"/><rect x="1" y="1" width="7" height="11" fill="#fff"/><rect x="8" y="3" width="1" height="9" fill="#fff"/><rect x="7" y="0" width="2" height="2" fill="#e8e8e8"/><rect x="0" y="12" width="10" height="1" fill="#686868"/><path d="M2 3h5v1h-4l2 2.5l-2 2.5h4v1h-5v-1l2-2.5l-2-2.5z" fill="#101018" /></g><g transform="translate(9,0)"><rect x="0" y="1" width="5" height="5" fill="#e01828"/><rect x="1" y="0" width="5" height="1" fill="#f05058"/><rect x="5" y="1" width="1" height="5" fill="#a00c18"/><rect x="0" y="0" width="1" height="1" fill="#f05058"/></g><rect x="8" y="0" width="1" height="10" fill="#606060"/><g transform="translate(7,11)"><rect x="0" y="1" width="6" height="4" fill="#f0a020"/><rect x="1" y="0" width="6" height="1" fill="#f8c860"/><rect x="6" y="1" width="1" height="4" fill="#a06008"/><rect x="2" y="2" width="2" height="2" fill="#5a3800"/></g></svg><svg class="a" style="left:898px;top:73px" width="16" height="16" shape-rendering="crispEdges"><g transform="translate(0,1)"><rect x="0" y="0" width="9" height="12" fill="#c8c8c8"/><rect x="9" y="2" width="1" height="10" fill="#b8b8b8"/><rect x="1" y="1" width="7" height="11" fill="#fff"/><rect x="8" y="3" width="1" height="9" fill="#fff"/><rect x="7" y="0" width="2" height="2" fill="#e8e8e8"/><rect x="0" y="12" width="10" height="1" fill="#686868"/><path d="M2 3h5v1h-4l2 2.5l-2 2.5h4v1h-5v-1l2-2.5l-2-2.5z" fill="#101018" /></g><g transform="translate(9,2)"><rect x="0" y="1" width="5" height="5" fill="#e01828"/><rect x="1" y="0" width="5" height="1" fill="#f05058"/><rect x="5" y="1" width="1" height="5" fill="#a00c18"/><rect x="0" y="0" width="1" height="1" fill="#f05058"/></g><rect x="8" y="2" width="1" height="9" fill="#606060"/><g transform="translate(6,12)"><rect x="0" y="0" width="8" height="3" fill="#3c8ce8"/><rect x="1" y="1" width="1" height="1" fill="#fff"/><rect x="3" y="1" width="1" height="1" fill="#fff"/><rect x="5" y="1" width="1" height="1" fill="#fff"/><rect x="7" y="0" width="2" height="2" fill="#1850a0"/><rect x="1" y="3" width="6" height="1" fill="#00000030"/></g></svg><svg class="a" style="left:921px;top:73px" width="16" height="16" shape-rendering="crispEdges"><g transform="translate(0,1)"><rect x="0" y="0" width="9" height="12" fill="#c8c8c8"/><rect x="9" y="2" width="1" height="10" fill="#b8b8b8"/><rect x="1" y="1" width="7" height="11" fill="#fff"/><rect x="8" y="3" width="1" height="9" fill="#fff"/><rect x="7" y="0" width="2" height="2" fill="#e8e8e8"/><rect x="0" y="12" width="10" height="1" fill="#686868"/><path d="M2 3h5v1h-4l2 2.5l-2 2.5h4v1h-5v-1l2-2.5l-2-2.5z" fill="#101018" /></g><rect x="7" y="4" width="8" height="12" fill="#808080"/><rect x="8" y="5" width="6" height="10" fill="#e8e8e8"/><rect x="8" y="6" width="6" height="1" fill="#909090"/><rect x="8" y="8" width="6" height="1" fill="#909090"/><rect x="8" y="10" width="6" height="1" fill="#909090"/><rect x="8" y="12" width="6" height="1" fill="#909090"/><rect x="6" y="15" width="10" height="1" fill="#606060"/></svg><svg class="a" style="left:944px;top:73px" width="16" height="16" shape-rendering="crispEdges"><g transform="translate(0,1)"><rect x="0" y="0" width="9" height="12" fill="#c8c8c8"/><rect x="9" y="2" width="1" height="10" fill="#b8b8b8"/><rect x="1" y="1" width="7" height="11" fill="#fff"/><rect x="8" y="3" width="1" height="9" fill="#fff"/><rect x="7" y="0" width="2" height="2" fill="#e8e8e8"/><rect x="0" y="12" width="10" height="1" fill="#686868"/><path d="M2 3h5v1h-4l2 2.5l-2 2.5h4v1h-5v-1l2-2.5l-2-2.5z" fill="#101018" /></g><g transform="translate(6,5)"><path d="M0 4l2-1.5l2 2.5l4-5l1.5 1l-5.5 7.5z" fill="#18b038" shape-rendering="auto"/></g></svg><svg class="a" style="left:966px;top:86px" width="7" height="4" shape-rendering="crispEdges"><rect x="0" y="0" width="7" height="1" fill="#2a2008"/><rect x="1" y="1" width="5" height="1" fill="#2a2008"/><rect x="2" y="2" width="3" height="1" fill="#2a2008"/><rect x="3" y="3" width="1" height="1" fill="#2a2008"/></svg><span class="t" style="left:638.5px;top:49.3px;font-size:12.5px;font-weight:bold;color:#6c4a34;letter-spacing:.6px">M</span><span class="t" style="left:658.5px;top:49.3px;font-size:12.5px;font-weight:bold;color:#6c4a34;letter-spacing:.6px">M+</span><span class="t" style="left:681.5px;top:49.3px;font-size:12.5px;font-weight:bold;color:#6c4a34;letter-spacing:.6px">M-</span><svg class="a" style="left:2px;top:2px" width="14.5" height="14.5" viewBox="0 0 100 100"><defs><radialGradient id="lg" cx="45%" cy="35%" r="70%"><stop offset="0" stop-color="#fffde8"/><stop offset=".5" stop-color="#fde272"/><stop offset="1" stop-color="#f0a630"/></radialGradient></defs><circle cx="50" cy="50" r="49" fill="url(#lg)" stroke="#e0a030" stroke-width="2"/><g transform="translate(-1,-3)" fill="#ee3414"><path d="M12 42l14-9h8v37h-10v-26l-12 6z"/><path d="M70 35a18 18 0 1 0 0 32h27v-6h-29a11 11 0 1 1 0-20h6v-6z"/><path d="M62 51h35v5h-35z"/></g></svg><svg class="a" style="left:67px;top:864px" width="30" height="30" viewBox="0 0 100 100"><defs><radialGradient id="lg2" cx="45%" cy="35%" r="70%"><stop offset="0" stop-color="#fffde8"/><stop offset=".5" stop-color="#fde272"/><stop offset="1" stop-color="#f0a630"/></radialGradient></defs><circle cx="50" cy="50" r="49" fill="url(#lg2)" stroke="#e0a030" stroke-width="2"/><g transform="translate(-1,-3)" fill="#ee3414"><path d="M12 42l14-9h8v37h-10v-26l-12 6z"/><path d="M70 35a18 18 0 1 0 0 32h27v-6h-29a11 11 0 1 1 0-20h6v-6z"/><path d="M62 51h35v5h-35z"/></g></svg><svg class="a" style="left:5px;top:870px" width="16" height="16"><path d="M1 3c2-1.5 4-1.5 6.5 0l-1.2 5c-2.2-1.3-4.3-1.3-6.3 0z" fill="#e85820"/><path d="M8.5 3.5c2 1.3 4 1.3 6.5 0l-1.3 5c-2.2 1.2-4.3 1.2-6.4 0z" fill="#58a830"/><path d="M0 9.5c2-1.3 4-1.3 6 0l-1.2 5c-2-1.3-4-1.3-6 0z" fill="#3070d8"/><path d="M7 10c2 1.2 4 1.2 6.3 0l-1.2 5c-2.2 1.2-4.2 1.2-6.3 0z" fill="#f8c020"/></svg><svg class="a" style="left:3px;top:97px" width="16" height="16" shape-rendering="crispEdges"><rect x="1" y="9" width="10" height="6" fill="#3868b8"/><rect x="2" y="10" width="8" height="4" fill="#c8dcf8"/><rect x="5" y="4" width="1" height="6" fill="#000"/><rect x="3" y="8" width="5" height="1" fill="#000"/><rect x="4" y="9" width="3" height="1" fill="#000"/><rect x="5" y="10" width="1" height="1" fill="#000"/><rect x="5" y="3" width="4" height="1" fill="#000"/><path d="M8 3.5l3.5-3.5l3.5 3.5l-3.5 3.5z" fill="#f8e040" shape-rendering="auto" stroke="#c8a818" stroke-width=".6"/></svg><svg class="a" style="left:176px;top:816px" width="16" height="16" shape-rendering="crispEdges"><rect x="1" y="9" width="10" height="6" fill="#3868b8"/><rect x="2" y="10" width="8" height="4" fill="#c8dcf8"/><rect x="5" y="4" width="1" height="6" fill="#000"/><rect x="3" y="8" width="5" height="1" fill="#000"/><rect x="4" y="9" width="3" height="1" fill="#000"/><rect x="5" y="10" width="1" height="1" fill="#000"/><rect x="5" y="3" width="4" height="1" fill="#000"/><path d="M8 3.5l3.5-3.5l3.5 3.5l-3.5 3.5z" fill="#f8e040" shape-rendering="auto" stroke="#c8a818" stroke-width=".6"/></svg><svg class="a" style="left:4px;top:818px" width="14" height="12" shape-rendering="crispEdges"><rect x="0" y="0" width="14" height="12" fill="#6878a0"/><rect x="1" y="1" width="12" height="2" fill="#a8b4d0"/><rect x="1" y="3" width="3" height="8" fill="#fff"/><rect x="5" y="3" width="3" height="8" fill="#fff"/><rect x="9" y="3" width="4" height="8" fill="#fff"/></svg><svg class="a" style="left:643px;top:792px" width="17" height="17" shape-rendering="crispEdges"><g transform="translate(0,0)"><rect x="0" y="0" width="8" height="3" fill="#2c1ca4"/><rect x="1" y="1" width="1" height="1" fill="#fff"/><rect x="3" y="1" width="1" height="1" fill="#fff"/><rect x="5" y="1" width="1" height="1" fill="#fff"/><rect x="7" y="0" width="2" height="2" fill="#000"/><rect x="1" y="3" width="6" height="1" fill="#00000030"/></g><g transform="translate(3,3)"><g shape-rendering="auto"><path d="M7.5 0.5v7h-7z" fill="#94dc30" stroke="#1c4c0c" stroke-width="1"/><path d="M0.5 0.5l4.5 4.5" stroke="#1c4c0c" stroke-width="1.8"/><path d="M2 1l4 4" stroke="#58a020" stroke-width="1"/></g></g><g transform="translate(5,11)"><rect x="0" y="0" width="8" height="3" fill="#f08828"/><rect x="1" y="1" width="1" height="1" fill="#ffe0b0"/><rect x="3" y="1" width="1" height="1" fill="#ffe0b0"/><rect x="5" y="1" width="1" height="1" fill="#ffe0b0"/><rect x="7" y="0" width="2" height="2" fill="#a04808"/><rect x="1" y="3" width="6" height="1" fill="#00000030"/></g></svg><svg class="a" style="left:831px;top:792px" width="16" height="16" shape-rendering="crispEdges"><path d="M3 16l5-8h7v8z" fill="#b8b0a8" shape-rendering="auto"/><rect x="0" y="2" width="9" height="3" fill="#30b830"/><rect x="1" y="3" width="7" height="1" fill="#70e060"/><g transform="translate(8,5)"><rect x="0" y="0" width="6" height="1" fill="#fce048"/><rect x="1" y="0" width="4" height="1" fill="#fff088"/><rect x="0" y="1" width="6" height="1" fill="#7a5c00"/><rect x="1" y="1" width="4" height="1" fill="#c89c10"/><rect x="0" y="2" width="6" height="1" fill="#fce048"/><rect x="1" y="2" width="4" height="1" fill="#fff088"/><rect x="0" y="3" width="6" height="1" fill="#7a5c00"/><rect x="1" y="3" width="4" height="1" fill="#c89c10"/><rect x="0" y="4" width="6" height="1" fill="#fce048"/><rect x="1" y="4" width="4" height="1" fill="#fff088"/><rect x="0" y="5" width="6" height="1" fill="#7a5c00"/><rect x="1" y="5" width="4" height="1" fill="#c89c10"/><rect x="0" y="6" width="6" height="1" fill="#fce048"/><rect x="1" y="6" width="4" height="1" fill="#fff088"/><rect x="0" y="7" width="6" height="1" fill="#7a5c00"/><rect x="1" y="7" width="4" height="1" fill="#c89c10"/><rect x="0" y="8" width="6" height="1" fill="#fce048"/><rect x="1" y="8" width="4" height="1" fill="#fff088"/><rect x="0" y="9" width="6" height="1" fill="#7a5c00"/><rect x="1" y="9" width="4" height="1" fill="#c89c10"/><rect x="0" y="10" width="6" height="1" fill="#5a4400"/></g></svg><svg class="a" style="left:1005px;top:791px" width="16" height="17" shape-rendering="crispEdges"><path d="M3 16l5-8h7v8z" fill="#b8b0a8" shape-rendering="auto"/><rect x="3" y="0" width="3" height="9" fill="#30b830"/><rect x="0" y="3" width="9" height="3" fill="#30b830"/><rect x="4" y="1" width="1" height="7" fill="#70e060"/><rect x="1" y="4" width="7" height="1" fill="#70e060"/><g transform="translate(8,6)"><rect x="0" y="0" width="6" height="1" fill="#fce048"/><rect x="1" y="0" width="4" height="1" fill="#fff088"/><rect x="0" y="1" width="6" height="1" fill="#7a5c00"/><rect x="1" y="1" width="4" height="1" fill="#c89c10"/><rect x="0" y="2" width="6" height="1" fill="#fce048"/><rect x="1" y="2" width="4" height="1" fill="#fff088"/><rect x="0" y="3" width="6" height="1" fill="#7a5c00"/><rect x="1" y="3" width="4" height="1" fill="#c89c10"/><rect x="0" y="4" width="6" height="1" fill="#fce048"/><rect x="1" y="4" width="4" height="1" fill="#fff088"/><rect x="0" y="5" width="6" height="1" fill="#7a5c00"/><rect x="1" y="5" width="4" height="1" fill="#c89c10"/><rect x="0" y="6" width="6" height="1" fill="#fce048"/><rect x="1" y="6" width="4" height="1" fill="#fff088"/><rect x="0" y="7" width="6" height="1" fill="#7a5c00"/><rect x="1" y="7" width="4" height="1" fill="#c89c10"/><rect x="0" y="8" width="6" height="1" fill="#5a4400"/></g></svg><svg class="a" style="left:1180px;top:791px" width="17" height="17" shape-rendering="crispEdges"><g transform="translate(0,0)"><rect x="0" y="0" width="8" height="3" fill="#2c1ca4"/><rect x="1" y="1" width="1" height="1" fill="#fff"/><rect x="3" y="1" width="1" height="1" fill="#fff"/><rect x="5" y="1" width="1" height="1" fill="#fff"/><rect x="7" y="0" width="2" height="2" fill="#000"/><rect x="1" y="3" width="6" height="1" fill="#00000030"/></g><g transform="translate(3,4)"><g shape-rendering="auto"><path d="M7.5 0.5v7h-7z" fill="#94dc30" stroke="#1c4c0c" stroke-width="1"/><path d="M0.5 0.5l4.5 4.5" stroke="#1c4c0c" stroke-width="1.8"/><path d="M2 1l4 4" stroke="#58a020" stroke-width="1"/></g></g><g transform="translate(10,10)"><rect x="0" y="1" width="5" height="5" fill="#e01828"/><rect x="1" y="0" width="5" height="1" fill="#f05058"/><rect x="5" y="1" width="1" height="5" fill="#a00c18"/><rect x="0" y="0" width="1" height="1" fill="#f05058"/></g></svg>
</body></html>
